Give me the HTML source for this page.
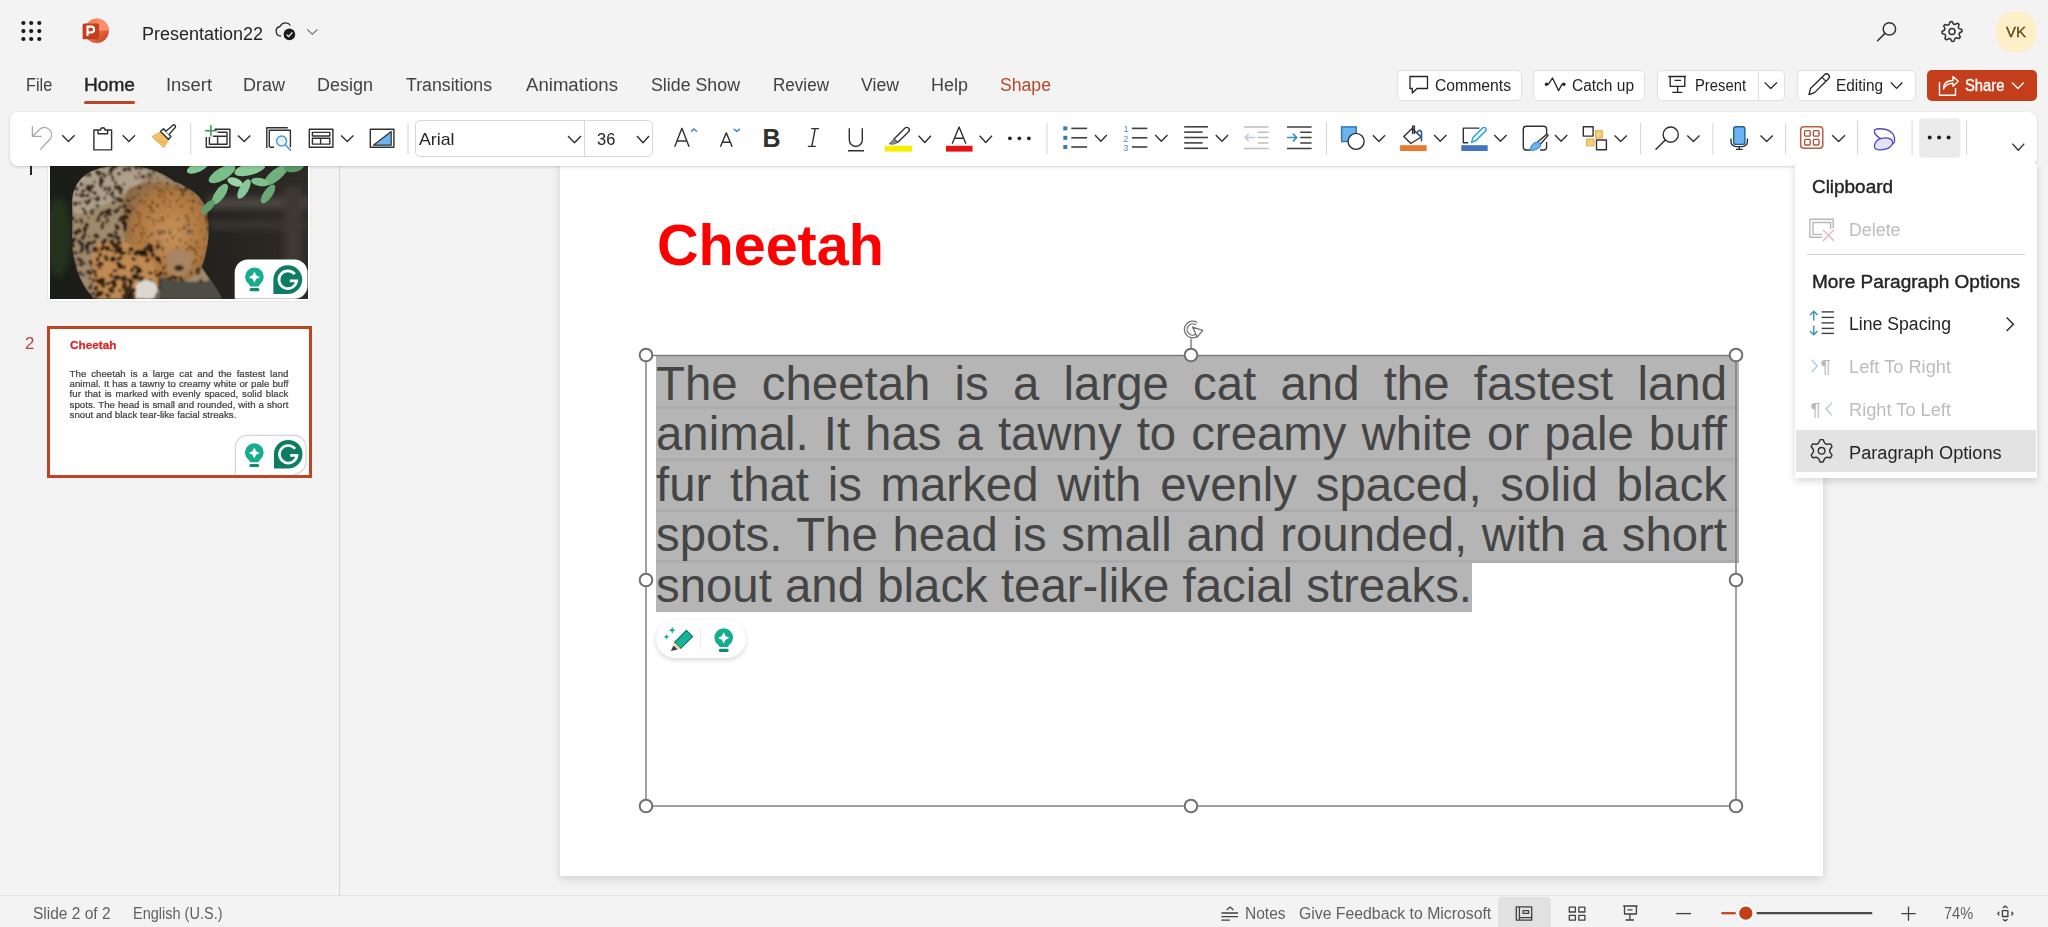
<!DOCTYPE html>
<html><head><meta charset="utf-8"><style>
html,body{margin:0;padding:0}
body{width:2048px;height:927px;overflow:hidden;position:relative;background:#f3f3f3;font-family:"Liberation Sans",sans-serif}
.t{position:absolute;white-space:pre;line-height:0;transform-origin:0 0;z-index:50}
.a{position:absolute}
svg{position:absolute;overflow:visible}

</style></head><body>
<div class='a' style='left:560px;top:120px;width:1263px;height:756px;background:#fff;box-shadow:0 3px 9px rgba(0,0,0,.14)'></div><div class='a' style='left:339px;top:160px;width:1px;height:736px;background:#d6d6d6'></div><div class='a' style='left:0;top:895px;width:2048px;height:1px;background:#e3e3e3'></div><div class='a' style='left:10px;top:112px;width:2027px;height:54px;background:#fff;border-radius:8px;box-shadow:0 1px 3px rgba(0,0,0,.18);z-index:10'></div><div class='a' style='left:84px;top:101px;width:51px;height:3px;border-radius:2px;background:#b9452a'></div><div class='a' style='left:1397px;top:70px;width:125px;height:31px;background:#fff;border:1px solid #e0e0e0;box-sizing:border-box;border-radius:5px'></div><div class='a' style='left:1533px;top:70px;width:112px;height:31px;background:#fff;border:1px solid #e0e0e0;box-sizing:border-box;border-radius:5px'></div><div class='a' style='left:1657px;top:70px;width:128px;height:31px;background:#fff;border:1px solid #e0e0e0;box-sizing:border-box;border-radius:5px'></div><div class='a' style='left:1797px;top:70px;width:119px;height:31px;background:#fff;border:1px solid #e0e0e0;box-sizing:border-box;border-radius:5px'></div><div class='a' style='left:1758px;top:71px;width:1px;height:29px;background:#e0e0e0'></div><div class='a' style='left:1927px;top:70px;width:110px;height:31px;background:#c43e1c;border-radius:5px'></div><div class='a' style='left:1995px;top:11px;width:42px;height:42px;border-radius:50%;background:#fcefc9'></div><div class='a' style='left:415px;top:120px;width:238px;height:37px;border:1px solid #d8d8d8;box-sizing:border-box;border-radius:5px;z-index:11'></div><div class='a' style='left:584px;top:121px;width:1px;height:35px;background:#d8d8d8;z-index:11'></div><div class='a' style='left:1795px;top:164px;width:242px;height:314px;background:#fff;box-shadow:0 3px 8px rgba(0,0,0,.16);clip-path:inset(0 -20px -20px -20px);z-index:40'></div><div class='a' style='left:1807px;top:254px;width:218px;height:1px;background:#cfcfcf;z-index:41'></div><div class='a' style='left:1796px;top:430px;width:240px;height:42px;background:#e3e3e3;z-index:41'></div><div class='a' style='left:1498px;top:897px;width:53px;height:30px;background:#e1e1e1;border-radius:4px 4px 0 0'></div><div class='a' style='left:656px;top:355.5px;width:1083px;height:52.3px;background:#b5b5b5;z-index:2'></div><div class='a' style='left:656px;top:407.8px;width:1083px;height:51.2px;background:#b5b5b5;z-index:2'></div><div class='a' style='left:656px;top:406.3px;width:1083px;height:3px;background:#acacac;z-index:3'></div><div class='a' style='left:656px;top:459px;width:1083px;height:51.2px;background:#b5b5b5;z-index:2'></div><div class='a' style='left:656px;top:457.5px;width:1083px;height:3px;background:#acacac;z-index:3'></div><div class='a' style='left:656px;top:510.2px;width:1083px;height:51.2px;background:#b5b5b5;z-index:2'></div><div class='a' style='left:656px;top:508.7px;width:1083px;height:3px;background:#acacac;z-index:3'></div><div class='a' style='left:656px;top:561.4px;width:816px;height:51.1px;background:#b5b5b5;z-index:2'></div><div class='a' style='left:656px;top:559.9px;width:1083px;height:3px;background:#acacac;z-index:3'></div><div class='a' style='left:656px;top:384.0px;width:1071px;font-size:47.36px;line-height:0;color:#454545;text-align:justify;text-align-last:justify;z-index:5'>The cheetah is a large cat and the fastest land</div><div class='a' style='left:656px;top:434.4px;width:1071px;font-size:47.36px;line-height:0;color:#454545;text-align:justify;text-align-last:justify;z-index:5'>animal. It has a tawny to creamy white or pale buff</div><div class='a' style='left:656px;top:484.8px;width:1071px;font-size:47.36px;line-height:0;color:#454545;text-align:justify;text-align-last:justify;z-index:5'>fur that is marked with evenly spaced, solid black</div><div class='a' style='left:656px;top:535.3px;width:1071px;font-size:47.36px;line-height:0;color:#454545;text-align:justify;text-align-last:justify;z-index:5'>spots. The head is small and rounded, with a short</div><div class='a' style='left:656px;top:585.7px;width:1071px;font-size:47.36px;line-height:0;color:#454545;z-index:5'>snout and black tear-like facial streaks.</div><svg style='left:0;top:0;z-index:6' width='2048' height='927'><rect x='646' y='355.5' width='1090' height='450.5' fill='none' stroke='#7a7a7a' stroke-width='1.4'/><circle cx='646' cy='355' r='6.3' fill='#fff' stroke='#707070' stroke-width='2'/><circle cx='1191' cy='355' r='6.3' fill='#fff' stroke='#707070' stroke-width='2'/><circle cx='1736' cy='355' r='6.3' fill='#fff' stroke='#707070' stroke-width='2'/><circle cx='646' cy='580' r='6.3' fill='#fff' stroke='#707070' stroke-width='2'/><circle cx='1736' cy='580' r='6.3' fill='#fff' stroke='#707070' stroke-width='2'/><circle cx='646' cy='806' r='6.3' fill='#fff' stroke='#707070' stroke-width='2'/><circle cx='1191' cy='806' r='6.3' fill='#fff' stroke='#707070' stroke-width='2'/><circle cx='1736' cy='806' r='6.3' fill='#fff' stroke='#707070' stroke-width='2'/><line x1='1191' y1='338.5' x2='1191' y2='348' stroke='#707070' stroke-width='1.3'/><path d='M1196.8 335.2 A7 7 0 1 1 1196.5 323.6' fill='none' stroke='#707070' stroke-width='4'/><path d='M1196.8 335.2 A7 7 0 1 1 1196.5 323.6' fill='none' stroke='#fff' stroke-width='1.5'/><path d='M1192.6 327.2 L1202.8 330.4 L1197.2 337 Z' fill='#fff' stroke='#707070' stroke-width='1.3' stroke-linejoin='round'/></svg><div class='a' style='left:656px;top:620px;width:90px;height:38px;border-radius:19px;background:#fff;box-shadow:0 2px 5px rgba(0,0,0,.16);z-index:7'></div><div class='a' style='left:700px;top:628px;width:1px;height:21px;background:#ececec;z-index:8'></div><svg style='left:0;top:0;z-index:20' width='2048' height='60'><circle cx='23.4' cy='23' r='2.1' fill='#1a1a1a'/><circle cx='23.4' cy='31.1' r='2.1' fill='#1a1a1a'/><circle cx='23.4' cy='39' r='2.1' fill='#1a1a1a'/><circle cx='31.2' cy='23' r='2.1' fill='#1a1a1a'/><circle cx='31.2' cy='31.1' r='2.1' fill='#1a1a1a'/><circle cx='31.2' cy='39' r='2.1' fill='#1a1a1a'/><circle cx='39.3' cy='23' r='2.1' fill='#1a1a1a'/><circle cx='39.3' cy='31.1' r='2.1' fill='#1a1a1a'/><circle cx='39.3' cy='39' r='2.1' fill='#1a1a1a'/><defs><linearGradient id='pg' x1='0' y1='0' x2='1' y2='1'><stop offset='0' stop-color='#ff8f6b'/><stop offset='.5' stop-color='#ed6c47'/><stop offset='1' stop-color='#c43e1c'/></linearGradient></defs><circle cx='96.7' cy='30.8' r='12.2' fill='url(#pg)'/><path d='M96.7 18.6 A12.2 12.2 0 0 1 108.9 30.8 L96.7 30.8 Z' fill='#ff8f6b'/><rect x='82.6' y='23.6' width='16.5' height='15.6' rx='1.5' fill='#c43e1c'/><path d='M87.5 36 V26.6 H91.2 A2.9 2.9 0 0 1 91.2 32.4 H87.5' fill='none' stroke='#fff' stroke-width='2.1'/><path d='M281 36 A4.8 4.8 0 0 1 280 26.5 A6 6 0 0 1 290.5 25.5' fill='none' stroke='#242424' stroke-width='1.3'/><circle cx='289.4' cy='34.4' r='5.8' fill='#1a1a1a'/><path d='M286.6 34.6 L288.6 36.6 L292.4 32.4' fill='none' stroke='#fff' stroke-width='1.3'/><path d='M307.2 29.3 L312.3 34.3 L317.5 29.3' fill='none' stroke='#616161' stroke-width='1.1'/><circle cx='1889.4' cy='28.9' r='6.2' fill='none' stroke='#333' stroke-width='1.5'/><line x1='1884.9' y1='33.4' x2='1877.6' y2='40.7' stroke='#333' stroke-width='1.6' stroke-linecap='round'/><polygon points='1952.00,21.50 1953.48,24.05 1954.91,24.48 1957.56,23.19 1959.07,24.43 1958.32,27.28 1959.02,28.59 1961.81,29.55 1962.00,31.50 1959.45,32.98 1959.02,34.41 1960.31,37.06 1959.07,38.57 1956.22,37.82 1954.91,38.52 1953.95,41.31 1952.00,41.50 1950.52,38.95 1949.09,38.52 1946.44,39.81 1944.93,38.57 1945.68,35.72 1944.98,34.41 1942.19,33.45 1942.00,31.50 1944.55,30.02 1944.98,28.59 1943.69,25.94 1944.93,24.43 1947.78,25.18 1949.09,24.48 1950.05,21.69' fill='none' stroke='#333' stroke-width='1.5' stroke-linejoin='round'/><circle cx='1952' cy='31.5' r='3' fill='none' stroke='#333' stroke-width='1.5'/></svg><svg style='left:0;top:0;z-index:20' width='2048' height='110'><path d='M1410 76.5 H1427.5 V88.5 H1417 L1412.3 93 V88.5 H1410 Z' fill='none' stroke='#242424' stroke-width='1.3' stroke-linejoin='round'/><path d='M1546.3 84.2 H1548.5 L1552.5 78 L1558.6 90.6 L1562 84.2 H1564' fill='none' stroke='#242424' stroke-width='1.3' stroke-linejoin='round'/><circle cx='1546.5' cy='84.2' r='1.7' fill='#242424'/><circle cx='1563.8' cy='84.2' r='1.7' fill='#242424'/><path d='M1668.3 76.5 H1686 M1670.2 76.5 V86.3 H1684.8 V76.5 M1674.5 80.4 H1681 M1677.6 86.3 V92.4 M1672.3 92.4 H1682.4' fill='none' stroke='#242424' stroke-width='1.3' stroke-linejoin='round'/><path d='M1764.6 82.4 L1770.8 88.5 L1777 82.4' fill='none' stroke='#242424' stroke-width='1.3' stroke-linejoin='round'/><path d='M1809 94.6 L1810.5 88.5 L1824.5 74.8 A2.6 2.6 0 0 1 1828.5 78.8 L1814.5 92.6 Z M1822 77.4 L1826 81.4' fill='none' stroke='#242424' stroke-width='1.3' stroke-linejoin='round'/><path d='M1890.9 82.5 L1896.6 88.4 L1902.3 82.5' fill='none' stroke='#242424' stroke-width='1.3' stroke-linejoin='round'/><path d='M1939.5 82 V95.2 H1955.5 V88' fill='none' stroke='#fff' stroke-width='1.4' stroke-linejoin='round'/><path d='M1943.5 89 C1943.5 83 1947 80.5 1953 80.5 V76.5 L1958.3 81.3 L1953 86.3 V83.3 C1948.5 83.3 1945.5 85 1943.5 89 Z' fill='none' stroke='#fff' stroke-width='1.4' stroke-linejoin='round'/><path d='M2012 82.6 L2017.9 88.6 L2023.8 82.6' fill='none' stroke='#fff' stroke-width='1.4' stroke-linejoin='round'/></svg><svg style='left:0;top:0;z-index:20' width='2048' height='170'><path d='M32.4 126.2 V136.4 H41.8 M32.6 136.2 L40 129 A7.2 7.2 0 0 1 50.5 138.5 L40.2 149.6' fill='none' stroke='#a8a8a8' stroke-width='1.3'/><path d='M62.3 135.3 L68.44999999999999 141.5 L74.6 135.3' fill='none' stroke='#303030' stroke-width='1.4' stroke-linejoin='round'/><path d='M98 130 H93.9 V149.9 H111.6 V130 H107.6' fill='none' stroke='#303030' stroke-width='1.4' stroke-linejoin='round'/><path d='M98 133.8 H107.6 V130 H105 A2.2 2.2 0 0 0 100.6 130 H98 Z' fill='none' stroke='#303030' stroke-width='1.4' stroke-linejoin='round'/><path d='M122.7 135.3 L128.85 141.5 L135.0 135.3' fill='none' stroke='#303030' stroke-width='1.4' stroke-linejoin='round'/><path d='M152 136.6 L160.6 131.8 L168.4 140 L163.8 147.8 Z' fill='#f2c06b' stroke='#e0a040' stroke-width='0.8'/><path d='M154.5 139.5 L165 143.5' stroke='#e8a848' stroke-width='1'/><path d='M160.6 131.4 L163.6 128.8 L171 136.4 L168.6 139.4 Z' fill='#fff' fill='none' stroke='#303030' stroke-width='1.4' stroke-linejoin='round'/><path d='M165.6 131.6 L172.6 125.4 A1.6 1.6 0 0 1 175 127.8 L168.8 134.6' fill='#fff' fill='none' stroke='#303030' stroke-width='1.4' stroke-linejoin='round'/><rect x='190.2' y='123' width='1' height='31' fill='#d4d4d4'/><path d='M214.5 129.3 H229.9 V147.2 H206.3 V137 M217.5 132.2 H227 V144.3 H209.4 V137' fill='none' stroke='#303030' stroke-width='1.4' stroke-linejoin='round' stroke-width='1.3'/><path d='M213 136.3 H227 M217.6 136.3 V144.3' fill='none' stroke='#303030' stroke-width='1.4' stroke-linejoin='round' stroke-width='1.1'/><path d='M210.9 125 V136.6 M205 130.8 H216.8' stroke='#2f9e44' stroke-width='1.5'/><path d='M238 135.4 L244.15 141.6 L250.3 135.4' fill='none' stroke='#303030' stroke-width='1.4' stroke-linejoin='round'/><path d='M266.8 148 V127.7 H287.8' fill='none' stroke='#303030' stroke-width='1.4' stroke-linejoin='round' stroke-width='1.3'/><path d='M269.3 147.2 V130.3 H290.4 V147.2 M274 147.2 H270' fill='none' stroke='#303030' stroke-width='1.4' stroke-linejoin='round' stroke-width='1.3'/><circle cx='281.6' cy='141' r='5' fill='#e3f1fa' stroke='#4a98c8' stroke-width='1.4'/><path d='M285.2 144.8 L291 150.6' stroke='#4a98c8' stroke-width='1.5'/><rect x='309.3' y='129.3' width='23.6' height='17.9' fill='none' stroke='#303030' stroke-width='1.4' stroke-linejoin='round' stroke-width='1.4'/><path d='M312.4 132.4 H329.8 V136 H312.4 Z M312.4 138.2 H329.8 V144.1 H312.4 Z M320.6 138.2 V144.1' fill='none' stroke='#303030' stroke-width='1.4' stroke-linejoin='round' stroke-width='1.1'/><path d='M341.1 135.4 L347.25 141.6 L353.40000000000003 135.4' fill='none' stroke='#303030' stroke-width='1.4' stroke-linejoin='round'/><rect x='370.3' y='129.3' width='23.6' height='17.9' fill='none' stroke='#303030' stroke-width='1.4' stroke-linejoin='round' stroke-width='1.4'/><path d='M373.4 145.2 L391.2 131.6 V145.2 Z' fill='#6cb4ef' stroke='#303030' stroke-width='1.2' stroke-linejoin='round'/><rect x='407.5' y='123' width='1' height='31' fill='#d4d4d4'/><path d='M568 136 L574.5 142.8 L581 136' fill='none' stroke='#303030' stroke-width='1.4' stroke-linejoin='round'/><path d='M637 136 L643.0 142.8 L649 136' fill='none' stroke='#303030' stroke-width='1.4' stroke-linejoin='round'/></svg><svg style='left:0;top:0;z-index:20' width='2048' height='170'><path d='M674.7 146.7 L681.9 128.3 L689.1 146.7 M676.9 141 H686.9' fill='none' stroke='#303030' stroke-width='1.4' stroke-linejoin='round' stroke-width='1.5'/><path d='M691.1 131.8 L694 129 L697 131.8' fill='none' stroke='#3f88b8' stroke-width='1.4'/><path d='M720.4 146.7 L726.3 132.9 L732.2 146.7 M722.3 142.2 H730.3' fill='none' stroke='#303030' stroke-width='1.4' stroke-linejoin='round' stroke-width='1.5'/><path d='M733.7 128.8 L736.8 131.6 L739.9 128.8' fill='none' stroke='#3f88b8' stroke-width='1.4'/><text x='762.6' y='146.7' font-family='Liberation Sans' font-weight='700' font-size='25' fill='#303030'>B</text><path d='M811.2 128.6 H819 M807.8 146.4 H815.8 M815.2 128.6 L811.8 146.4' fill='none' stroke='#303030' stroke-width='1.4' stroke-linejoin='round' stroke-width='1.4'/><path d='M849.3 128.3 V140 A6.5 6.5 0 0 0 862.3 140 V128.3 M848 150.8 H864' fill='none' stroke='#303030' stroke-width='1.4' stroke-linejoin='round' stroke-width='1.5'/><rect x='885' y='145.8' width='27' height='5.8' fill='#f5f000'/><path d='M894 139 L904.8 128.2 A2.4 2.4 0 0 1 908.6 131.8 L897.6 142.6 Z' fill='#fff' fill='none' stroke='#303030' stroke-width='1.4' stroke-linejoin='round' stroke-width='1.3'/><path d='M894 139 L897.6 142.6 L893.8 144.2 L889.4 144 L892.2 140.6 Z' fill='#8a8a8a' stroke='#555' stroke-width='0.8'/><path d='M918.6 135.8 L924.8 142.5 L931 135.8' fill='none' stroke='#303030' stroke-width='1.4' stroke-linejoin='round'/><path d='M952.2 143.7 L959.1 127.1 L965.9 143.7 M954.6 138.3 H963.6' fill='none' stroke='#303030' stroke-width='1.4' stroke-linejoin='round' stroke-width='1.5'/><rect x='946' y='145.8' width='26.5' height='5.8' fill='#e81010'/><path d='M979.6 135.8 L985.8 142.5 L992 135.8' fill='none' stroke='#303030' stroke-width='1.4' stroke-linejoin='round'/><circle cx='1009.9' cy='138.3' r='1.9' fill='#222'/><circle cx='1019.4' cy='138.3' r='1.9' fill='#222'/><circle cx='1028.9' cy='138.3' r='1.9' fill='#222'/><rect x='1046.5' y='123' width='1' height='31' fill='#d4d4d4'/></svg><svg style='left:0;top:0;z-index:20' width='2048' height='170'><rect x='1063.3' y='126.4' width='4' height='4' fill='#2e7eb0'/><path d='M1071.3 128.4 H1087.1' stroke='#404040' stroke-width='1.6'/><path d='M1131.9 128.4 H1147.3' stroke='#404040' stroke-width='1.6'/><rect x='1063.3' y='135.8' width='4' height='4' fill='#2e7eb0'/><path d='M1071.3 137.8 H1087.1' stroke='#404040' stroke-width='1.6'/><path d='M1131.9 137.8 H1147.3' stroke='#404040' stroke-width='1.6'/><rect x='1063.3' y='145' width='4' height='4' fill='#2e7eb0'/><path d='M1071.3 147 H1087.1' stroke='#404040' stroke-width='1.6'/><path d='M1131.9 147 H1147.3' stroke='#404040' stroke-width='1.6'/><path d='M1095 135.1 L1100.9 141.3 L1106.8 135.1' fill='none' stroke='#303030' stroke-width='1.4' stroke-linejoin='round'/><text x='1123.5' y='132.4' font-family='Liberation Sans' font-size='9' fill='#4f94c0'>1</text><text x='1123.3' y='141.8' font-family='Liberation Sans' font-size='9' fill='#4f94c0'>2</text><text x='1123.3' y='151' font-family='Liberation Sans' font-size='9' fill='#4f94c0'>3</text><path d='M1155.2 135.1 L1161.35 141.3 L1167.5 135.1' fill='none' stroke='#303030' stroke-width='1.4' stroke-linejoin='round'/><path d='M1184.2 126.8 H1207.9' stroke='#404040' stroke-width='1.6'/><path d='M1184.2 132.1 H1202.6' stroke='#404040' stroke-width='1.6'/><path d='M1184.2 137.5 H1207.9' stroke='#404040' stroke-width='1.6'/><path d='M1184.2 142.9 H1202.6' stroke='#404040' stroke-width='1.6'/><path d='M1184.2 148.3 H1207.9' stroke='#404040' stroke-width='1.6'/><path d='M1215.8 135.1 L1221.9499999999998 141.3 L1228.1 135.1' fill='none' stroke='#303030' stroke-width='1.4' stroke-linejoin='round'/><path d='M1244 127 H1268.6 M1257.7 132.3 H1268.6 M1257.7 137.5 H1268.6 M1257.7 143 H1268.6 M1244 148.5 H1268.6' stroke='#bdbdbd' stroke-width='1.5'/><path d='M1245.2 137.5 H1255 M1248.7 134 L1245.2 137.5 L1248.7 141' fill='none' stroke='#a9cde2' stroke-width='1.4'/><path d='M1287 127 H1311.6 M1300.2 132.3 H1311.6 M1300.2 137.5 H1311.6 M1300.2 143 H1311.6 M1287 148.5 H1311.6' stroke='#404040' stroke-width='1.6'/><path d='M1287 137.5 H1296.7 M1292.8 133.6 L1296.7 137.5 L1292.8 141.4' fill='none' stroke='#3a8fc0' stroke-width='1.6'/><rect x='1325.9' y='122.3' width='1' height='33.2' fill='#d4d4d4'/><rect x='1341.6' y='126.9' width='14.6' height='14.6' fill='#6cb4ef' stroke='#2f79c0' stroke-width='1.5'/><circle cx='1356.1' cy='141.4' r='8' fill='#fff' stroke='#303030' stroke-width='1.4'/><path d='M1372.9 135.2 L1378.95 141.4 L1385 135.2' fill='none' stroke='#303030' stroke-width='1.4' stroke-linejoin='round'/></svg><svg style='left:0;top:0;z-index:20' width='2048' height='170'><rect x='1400.1' y='145.2' width='26.5' height='5.8' fill='#e8792e'/><path d='M1412.1 128.5 L1421.2 137 L1410.8 143.5 L1403.8 136.5 Z' fill='#fff' fill='none' stroke='#303030' stroke-width='1.4' stroke-linejoin='round' stroke-width='1.4'/><path d='M1412.6 134 V126.5 A1 1 0 0 1 1414.4 126.5 V134' fill='none' stroke='#303030' stroke-width='1.4' stroke-linejoin='round' stroke-width='1.3'/><path d='M1417 133 C1418 130 1420 129.5 1421.5 131.8 V141.5' fill='none' stroke='#1f5fa0' stroke-width='1.6'/><path d='M1434.1 135.1 L1440.25 141.3 L1446.4 135.1' fill='none' stroke='#303030' stroke-width='1.4' stroke-linejoin='round'/><path d='M1479.4 128.1 H1463.3 V142.8 H1468' fill='none' stroke='#303030' stroke-width='1.4' stroke-linejoin='round' stroke-width='1.4'/><path d='M1471.5 142.4 L1473 137.6 L1482.6 128 A1.9 1.9 0 0 1 1485.6 130.9 L1476 140.5 Z' fill='#e6f5fc' stroke='#2b9fd0' stroke-width='1.4' stroke-linejoin='round'/><rect x='1461.3' y='145.2' width='26.4' height='5.8' fill='#4472c4'/><path d='M1494.3 135.1 L1500.4499999999998 141.3 L1506.6 135.1' fill='none' stroke='#303030' stroke-width='1.4' stroke-linejoin='round'/><path d='M1530 150 H1526.3 A3 3 0 0 1 1523.3 147 V129.3 A3 3 0 0 1 1526.3 126.3 H1543.6 A3 3 0 0 1 1546.6 129.3 V134 M1546.6 142 V147 A3 3 0 0 1 1543.6 150 H1540' fill='none' stroke='#303030' stroke-width='1.4' stroke-linejoin='round' stroke-width='1.4'/><path d='M1537.5 142 L1546.8 134.4 A1 1 0 0 1 1548 135.6 L1540 144.5' fill='#fff' fill='none' stroke='#303030' stroke-width='1.4' stroke-linejoin='round' stroke-width='1.2'/><path d='M1528.6 150.3 C1531 149 1531 144 1535 142.5 L1538.5 141.8 L1540.6 144.4 L1539.8 147.2 C1536 150.6 1532 150.6 1528.6 150.3 Z' fill='#6cb4ef' stroke='#2f79c0' stroke-width='1'/><path d='M1555 135.1 L1561.1 141.3 L1567.2 135.1' fill='none' stroke='#303030' stroke-width='1.4' stroke-linejoin='round'/><rect x='1595.5' y='130.7' width='6.8' height='7.3' fill='#f5d07a' stroke='#e0a840' stroke-width='1'/><rect x='1586.7' y='139' width='7.3' height='6.8' fill='#f5d07a' stroke='#e0a840' stroke-width='1'/><rect x='1583.3' y='126.8' width='9.8' height='9.3' fill='#fff' fill='none' stroke='#303030' stroke-width='1.4' stroke-linejoin='round' stroke-width='1.4'/><rect x='1596.5' y='140' width='9.9' height='9.7' fill='#fff' fill='none' stroke='#303030' stroke-width='1.4' stroke-linejoin='round' stroke-width='1.4'/><path d='M1614.6 135.6 L1620.6999999999998 141.4 L1626.8 135.6' fill='none' stroke='#303030' stroke-width='1.4' stroke-linejoin='round'/><rect x='1640.1' y='122.9' width='1' height='31.69999999999999' fill='#d4d4d4'/><circle cx='1670.7' cy='134.6' r='7.6' fill='none' stroke='#303030' stroke-width='1.4' stroke-linejoin='round' stroke-width='1.5'/><path d='M1665.3 140 L1656 149.2' stroke='#303030' stroke-width='1.5' stroke-linecap='round'/><path d='M1687.3 135.6 L1693.4 141.4 L1699.5 135.6' fill='none' stroke='#303030' stroke-width='1.4' stroke-linejoin='round'/><rect x='1712.4' y='122.9' width='1' height='31.69999999999999' fill='#d4d4d4'/><rect x='1733.7' y='126.8' width='11.2' height='17.6' rx='2.2' fill='#6cb4ef' stroke='#1f5fa0' stroke-width='1.4'/><path d='M1731 138.5 V141.5 A5 5 0 0 0 1736 146.6 H1742.5 A5 5 0 0 0 1747.4 141.5 V138.5 M1739.3 146.6 V149.2 M1736 149.4 H1742.6' fill='none' stroke='#303030' stroke-width='1.4' stroke-linejoin='round' stroke-width='1.3'/><path d='M1760.5 135.6 L1766.65 141.4 L1772.8 135.6' fill='none' stroke='#303030' stroke-width='1.4' stroke-linejoin='round'/><rect x='1785.2' y='122.9' width='1' height='31.69999999999999' fill='#d4d4d4'/><rect x='1800.7' y='126.7' width='22.1' height='21.6' rx='3.2' fill='#fff' stroke='#b9603f' stroke-width='1.5'/><rect x='1804.6' y='130.6' width='5.6' height='5.6' rx='1' fill='none' stroke='#a65236' stroke-width='1.3'/><rect x='1813.4' y='130.6' width='5.6' height='5.6' rx='1' fill='none' stroke='#a65236' stroke-width='1.3'/><rect x='1804.6' y='139.4' width='5.6' height='5.6' rx='1' fill='none' stroke='#a65236' stroke-width='1.3'/><rect x='1813.4' y='139.4' width='5.6' height='5.6' rx='1' fill='none' stroke='#a65236' stroke-width='1.3'/><path d='M1832.2 135.3 L1838.6 141.4 L1845 135.3' fill='none' stroke='#303030' stroke-width='1.4' stroke-linejoin='round'/><rect x='1857.2' y='120.8' width='1' height='34.2' fill='#d4d4d4'/><path d='M1880.5 138.6 C1889 136.5 1893.8 139.5 1892.4 144 C1890 149 1884 150 1879 149.8 C1874 149.5 1874 146.5 1874.8 144 C1876 141 1878 139.3 1880.5 138.6 Z' fill='#e3e0fa' stroke='#5246c0' stroke-width='1.3'/><path d='M1880.5 138.6 C1876 136 1874 133 1874.4 130 C1877 128.5 1882 128.6 1886 129.5 C1892 131 1895.5 136 1894.6 141 C1894.2 143 1893.4 144 1892.4 144' fill='none' stroke='#5246c0' stroke-width='1.3'/><rect x='1911.6' y='120.8' width='1' height='34.2' fill='#d4d4d4'/><rect x='1919.2' y='118.6' width='41.3' height='39.1' rx='4' fill='#ebebeb'/><circle cx='1929.7' cy='137.5' r='2' fill='#1f1f1f'/><circle cx='1939.1' cy='137.5' r='2' fill='#1f1f1f'/><circle cx='1948.6' cy='137.5' r='2' fill='#1f1f1f'/><rect x='1966.1' y='120.8' width='1' height='34.2' fill='#d4d4d4'/><path d='M2012.3 143.6 L2018.3 150.2 L2024.3 143.6' fill='none' stroke='#303030' stroke-width='1.4' stroke-linejoin='round'/></svg><svg style='left:0;top:0;z-index:45' width='2048' height='500'><path d='M1822 237.2 H1809.9 V219.3 H1833.2 V228' fill='none' stroke='#b8b8b8' stroke-width='1.4'/><path d='M1822 234.4 H1813 V222.5 H1830.6 V229' fill='none' stroke='#b8b8b8' stroke-width='1.4' stroke-width='1.1'/><path d='M1822.9 229.8 L1834 241 M1834 229.8 L1822.9 241' stroke='#eab4bc' stroke-width='1.3'/><path d='M1813.8 311.5 V320.5 M1813.8 325.5 V334.5 M1810 315 L1813.8 311.2 L1817.6 315 M1810 331 L1813.8 334.8 L1817.6 331' fill='none' stroke='#3a8fc0' stroke-width='1.4'/><path d='M1821.6 311.9 H1833.9' stroke='#404040' stroke-width='1.4'/><path d='M1821.6 317.4 H1833.9' stroke='#404040' stroke-width='1.4'/><path d='M1821.6 322.9 H1833.9' stroke='#404040' stroke-width='1.4'/><path d='M1821.6 328.4 H1833.9' stroke='#404040' stroke-width='1.4'/><path d='M1821.6 333.4 H1833.9' stroke='#404040' stroke-width='1.4'/><path d='M2006.6 317.5 L2013.4 324.3 L2006.6 331' fill='none' stroke='#303030' stroke-width='1.5'/><path d='M1811.6 359.8 L1817.2 366 L1811.6 372.2' fill='none' stroke='#a9cde2' stroke-width='1.4'/><text x='1820.6' y='372.6' font-family='Liberation Sans' font-size='19' fill='#b8b8b8'>&#182;</text><text x='1810.4' y='415.6' font-family='Liberation Sans' font-size='19' fill='#b8b8b8'>&#182;</text><path d='M1831.9 402.8 L1826 409 L1831.9 415.2' fill='none' stroke='#a9cde2' stroke-width='1.4'/><polygon points='1823.07,439.60 1824.74,443.22 1826.59,444.29 1830.56,443.92 1832.04,446.48 1829.73,449.73 1829.73,451.87 1832.04,455.12 1830.56,457.68 1826.59,457.31 1824.74,458.38 1823.07,462.00 1820.13,462.00 1818.46,458.38 1816.61,457.31 1812.64,457.68 1811.16,455.12 1813.47,451.87 1813.47,449.73 1811.16,446.48 1812.64,443.92 1816.61,444.29 1818.46,443.22 1820.13,439.60' fill='none' stroke='#303030' stroke-width='1.4' stroke-linejoin='round'/><circle cx='1821.6' cy='450.8' r='3.3' fill='none' stroke='#303030' stroke-width='1.4'/></svg><svg style='left:0;top:880px;z-index:20' width='2048' height='47'><path d='M1226.6 29.899999999999977 L1230.1 27.100000000000023 L1233.3 29.899999999999977 M1221.4 33 H1238 M1221.4 36.60000000000002 H1238 M1221.4 40.10000000000002 H1229.9' fill='none' stroke='#404040' stroke-width='1.3' stroke-linejoin='round'/><path d='M1516.3 26.899999999999977 H1531.7 V40.200000000000045 H1516.3 Z M1519.4 26.899999999999977 V40.200000000000045 M1519.4 37.60000000000002 H1531.7' fill='none' stroke='#404040' stroke-width='1.3' stroke-linejoin='round' stroke-width='1.4'/><rect x='1523.1' y='30.600000000000023' width='5.5' height='2.8' fill='none' stroke='#404040' stroke-width='1.3' stroke-linejoin='round' stroke-width='1.2'/><rect x='1569.3' y='27.200000000000045' width='6.1' height='4.8' fill='none' stroke='#404040' stroke-width='1.3' stroke-linejoin='round' stroke-width='1.4'/><rect x='1569.3' y='35.39999999999998' width='6.1' height='4.8' fill='none' stroke='#404040' stroke-width='1.3' stroke-linejoin='round' stroke-width='1.4'/><rect x='1578.8' y='27.200000000000045' width='6.1' height='4.8' fill='none' stroke='#404040' stroke-width='1.3' stroke-linejoin='round' stroke-width='1.4'/><rect x='1578.8' y='35.39999999999998' width='6.1' height='4.8' fill='none' stroke='#404040' stroke-width='1.3' stroke-linejoin='round' stroke-width='1.4'/><path d='M1623.2 26 H1637.6 M1624.5 26 V34 H1636.4 V26 M1627.4 29.799999999999955 H1632.5 M1629.9 34 V40 M1625.6 40 H1634' fill='none' stroke='#404040' stroke-width='1.3' stroke-linejoin='round' stroke-width='1.4'/><path d='M1676 33.60000000000002 H1691' fill='none' stroke='#404040' stroke-width='1.3' stroke-linejoin='round'/><path d='M1721.4 33.200000000000045 H1736' stroke='#c43e1c' stroke-width='2.2'/><path d='M1756.7 33.200000000000045 H1872.2' stroke='#4a4a4a' stroke-width='2.2'/><circle cx='1745.8' cy='33.200000000000045' r='9.8' fill='#fff' stroke='#e6e6e6' stroke-width='0.8'/><circle cx='1745.8' cy='33.200000000000045' r='6.6' fill='#c43e1c'/><path d='M1901.3 33.60000000000002 H1915.7 M1908.5 26.399999999999977 V40.799999999999955' fill='none' stroke='#404040' stroke-width='1.3' stroke-linejoin='round'/><rect x='2002.4' y='30.600000000000023' width='5.5' height='5.9' fill='none' stroke='#404040' stroke-width='1.3' stroke-linejoin='round' stroke-width='1.4'/><path d='M2002.8 27.899999999999977 L2005.2 26.100000000000023 L2007.6 27.899999999999977 M2002.8 39.200000000000045 L2005.2 40.89999999999998 L2007.6 39.200000000000045 M1999.4 31.700000000000045 L1997.7 33.60000000000002 L1999.4 35.39999999999998 M2011.3 31.700000000000045 L2013 33.60000000000002 L2011.3 35.39999999999998' fill='none' stroke='#404040' stroke-width='1.3' stroke-linejoin='round' stroke-width='1.2'/></svg><div class='a' style='left:30.4px;top:160px;width:1.9px;height:14.7px;background:#242424;z-index:1'></div><div class='a' style='left:48px;top:145px;width:262px;height:156px;background:#fff;box-shadow:0 0 1px rgba(0,0,0,.25)'></div><svg style='left:50px;top:147px' width='258' height='152' viewBox='0 0 258 152'><defs><clipPath id='c1'><rect width='258' height='152'/></clipPath><filter id='bl' x='-10%' y='-10%' width='120%' height='120%'><feGaussianBlur stdDeviation='1.2'/></filter><filter id='bl2' x='-10%' y='-10%' width='120%' height='120%'><feGaussianBlur stdDeviation='0.6'/></filter><filter id='bl4' x='-10%' y='-10%' width='120%' height='120%'><feGaussianBlur stdDeviation='0.9'/></filter><filter id='bl3' x='-20%' y='-20%' width='140%' height='140%'><feGaussianBlur stdDeviation='3'/></filter><clipPath id='cb'><path d='M22 62 C20 38 34 21 62 19 C90 17 108 22 124 34 C140 40 152 48 157 64 C161 84 158 104 152 120 C160 132 168 142 172 152 H44 C32 140 24 122 22 100 Z'/></clipPath><radialGradient id='hd' cx='.55' cy='.5' r='.55'><stop offset='0' stop-color='#c8925c'/><stop offset='.7' stop-color='#b07840'/><stop offset='1' stop-color='#8f6c48'/></radialGradient><linearGradient id='bk' x1='0' y1='0' x2='1' y2='0'><stop offset='0' stop-color='#1a1c18'/><stop offset='.6' stop-color='#24221e'/><stop offset='1' stop-color='#2f2b27'/></linearGradient></defs><g clip-path='url(#c1)'><rect width='258' height='152' fill='url(#bk)'/><ellipse cx='8' cy='90' rx='14' ry='40' fill='#24301f' filter='url(#bl3)'/><g filter='url(#bl3)'><rect x='158' y='50' width='100' height='12' fill='#4a453f'/><rect x='158' y='74' width='100' height='8' fill='#3a3631'/><rect x='234' y='40' width='18' height='112' fill='#3d3833'/></g><g clip-path='url(#cb)'><g filter='url(#bl4)'><path d='M22 62 C20 38 34 21 62 19 C90 17 108 22 124 34 C140 40 152 48 157 64 C161 84 158 104 152 120 C160 132 168 142 172 152 H44 C32 140 24 122 22 100 Z' fill='#a08a6c'/><path d='M22 30 C40 18 80 16 100 24 C90 40 70 50 50 60 C35 66 24 70 22 62 Z' fill='#aea08a'/><path d='M78 42 C100 30 135 34 156 54 C162 76 160 100 152 120 C142 134 126 140 112 138 C92 136 80 120 76 100 C72 80 70 56 78 42 Z' fill='url(#hd)'/><path d='M46 96 C62 88 88 94 104 118 C110 134 106 152 106 152 H46 C40 134 40 110 46 96 Z' fill='#c08a52'/><ellipse cx='65.6' cy='35.7' rx='2.2' ry='1.3' transform='rotate(96 65.6 35.7)' fill='#2a1c12'/><ellipse cx='103.7' cy='139.6' rx='2.0' ry='1.1' transform='rotate(75 103.7 139.6)' fill='#1f150e'/><ellipse cx='31.3' cy='73.2' rx='2.5' ry='1.5' transform='rotate(40 31.3 73.2)' fill='#3a2a1c'/><ellipse cx='103.7' cy='23.5' rx='1.8' ry='1.0' transform='rotate(40 103.7 23.5)' fill='#3a2a1c'/><ellipse cx='144.2' cy='54.7' rx='0.7' ry='0.4' transform='rotate(56 144.2 54.7)' fill='#3a2a1c'/><ellipse cx='44.6' cy='94.7' rx='2.2' ry='1.5' transform='rotate(99 44.6 94.7)' fill='#1f150e'/><ellipse cx='101.0' cy='99.8' rx='2.5' ry='1.9' transform='rotate(140 101.0 99.8)' fill='#2a1c12'/><ellipse cx='104.1' cy='77.1' rx='0.9' ry='0.7' transform='rotate(126 104.1 77.1)' fill='#1f150e'/><ellipse cx='30.0' cy='56.1' rx='1.9' ry='1.3' transform='rotate(81 30.0 56.1)' fill='#3a2a1c'/><ellipse cx='162.1' cy='31.2' rx='1.6' ry='1.3' transform='rotate(27 162.1 31.2)' fill='#2a1c12'/><ellipse cx='80.0' cy='146.8' rx='1.7' ry='1.2' transform='rotate(142 80.0 146.8)' fill='#2a1c12'/><ellipse cx='68.0' cy='63.0' rx='1.9' ry='1.6' transform='rotate(12 68.0 63.0)' fill='#1f150e'/><ellipse cx='156.9' cy='80.0' rx='1.2' ry='0.7' transform='rotate(126 156.9 80.0)' fill='#3a2a1c'/><ellipse cx='103.0' cy='108.3' rx='2.4' ry='2.0' transform='rotate(160 103.0 108.3)' fill='#2a1c12'/><ellipse cx='21.3' cy='78.3' rx='1.4' ry='0.8' transform='rotate(11 21.3 78.3)' fill='#2a1c12'/><ellipse cx='37.0' cy='48.9' rx='1.8' ry='1.5' transform='rotate(15 37.0 48.9)' fill='#2a1c12'/><ellipse cx='77.0' cy='53.1' rx='1.4' ry='1.0' transform='rotate(99 77.0 53.1)' fill='#3a2a1c'/><ellipse cx='79.0' cy='64.2' rx='2.6' ry='2.3' transform='rotate(27 79.0 64.2)' fill='#1f150e'/><ellipse cx='40.2' cy='105.2' rx='1.2' ry='1.0' transform='rotate(33 40.2 105.2)' fill='#2a1c12'/><ellipse cx='18.6' cy='72.4' rx='1.7' ry='1.3' transform='rotate(172 18.6 72.4)' fill='#3a2a1c'/><ellipse cx='144.3' cy='145.2' rx='1.9' ry='1.6' transform='rotate(82 144.3 145.2)' fill='#3a2a1c'/><ellipse cx='135.3' cy='68.8' rx='0.9' ry='0.5' transform='rotate(114 135.3 68.8)' fill='#1f150e'/><ellipse cx='46.0' cy='149.9' rx='2.4' ry='1.4' transform='rotate(108 46.0 149.9)' fill='#1f150e'/><ellipse cx='18.0' cy='35.7' rx='1.3' ry='0.9' transform='rotate(5 18.0 35.7)' fill='#1f150e'/><ellipse cx='108.3' cy='35.4' rx='0.8' ry='0.5' transform='rotate(66 108.3 35.4)' fill='#1f150e'/><ellipse cx='35.0' cy='81.9' rx='2.7' ry='2.0' transform='rotate(56 35.0 81.9)' fill='#1f150e'/><ellipse cx='33.0' cy='61.9' rx='1.6' ry='1.3' transform='rotate(29 33.0 61.9)' fill='#1f150e'/><ellipse cx='48.2' cy='145.4' rx='2.3' ry='1.8' transform='rotate(165 48.2 145.4)' fill='#3a2a1c'/><ellipse cx='61.8' cy='103.1' rx='1.7' ry='1.4' transform='rotate(93 61.8 103.1)' fill='#1f150e'/><ellipse cx='70.3' cy='45.5' rx='2.0' ry='1.5' transform='rotate(115 70.3 45.5)' fill='#3a2a1c'/><ellipse cx='137.3' cy='149.9' rx='2.2' ry='1.8' transform='rotate(147 137.3 149.9)' fill='#3a2a1c'/><ellipse cx='136.1' cy='42.4' rx='1.0' ry='0.8' transform='rotate(178 136.1 42.4)' fill='#2a1c12'/><ellipse cx='87.4' cy='41.5' rx='1.1' ry='0.7' transform='rotate(146 87.4 41.5)' fill='#3a2a1c'/><ellipse cx='163.2' cy='145.8' rx='1.5' ry='0.9' transform='rotate(41 163.2 145.8)' fill='#1f150e'/><ellipse cx='67.6' cy='81.1' rx='2.7' ry='2.1' transform='rotate(0 67.6 81.1)' fill='#3a2a1c'/><ellipse cx='68.6' cy='103.1' rx='3.3' ry='1.9' transform='rotate(70 68.6 103.1)' fill='#3a2a1c'/><ellipse cx='128.3' cy='80.5' rx='0.7' ry='0.6' transform='rotate(60 128.3 80.5)' fill='#3a2a1c'/><ellipse cx='76.2' cy='70.0' rx='2.7' ry='2.1' transform='rotate(31 76.2 70.0)' fill='#1f150e'/><ellipse cx='22.0' cy='95.9' rx='1.9' ry='1.5' transform='rotate(110 22.0 95.9)' fill='#3a2a1c'/><ellipse cx='162.1' cy='105.0' rx='1.5' ry='1.1' transform='rotate(24 162.1 105.0)' fill='#1f150e'/><ellipse cx='135.5' cy='114.5' rx='1.1' ry='0.9' transform='rotate(25 135.5 114.5)' fill='#1f150e'/><ellipse cx='139.4' cy='43.9' rx='0.8' ry='0.5' transform='rotate(43 139.4 43.9)' fill='#3a2a1c'/><ellipse cx='65.9' cy='89.6' rx='2.5' ry='1.4' transform='rotate(133 65.9 89.6)' fill='#2a1c12'/><ellipse cx='115.4' cy='126.7' rx='1.7' ry='1.4' transform='rotate(158 115.4 126.7)' fill='#1f150e'/><ellipse cx='96.2' cy='86.7' rx='0.6' ry='0.4' transform='rotate(33 96.2 86.7)' fill='#1f150e'/><ellipse cx='132.1' cy='35.5' rx='0.7' ry='0.6' transform='rotate(22 132.1 35.5)' fill='#1f150e'/><ellipse cx='65.9' cy='86.0' rx='2.0' ry='1.7' transform='rotate(19 65.9 86.0)' fill='#3a2a1c'/><ellipse cx='26.4' cy='41.2' rx='1.2' ry='0.7' transform='rotate(81 26.4 41.2)' fill='#1f150e'/><ellipse cx='129.7' cy='140.0' rx='1.6' ry='1.2' transform='rotate(91 129.7 140.0)' fill='#3a2a1c'/><ellipse cx='47.3' cy='53.0' rx='2.0' ry='1.6' transform='rotate(91 47.3 53.0)' fill='#1f150e'/><ellipse cx='120.8' cy='135.1' rx='2.3' ry='1.5' transform='rotate(101 120.8 135.1)' fill='#1f150e'/><ellipse cx='141.5' cy='33.8' rx='0.7' ry='0.5' transform='rotate(13 141.5 33.8)' fill='#1f150e'/><ellipse cx='81.0' cy='44.1' rx='0.9' ry='0.5' transform='rotate(140 81.0 44.1)' fill='#3a2a1c'/><ellipse cx='112.6' cy='65.2' rx='0.8' ry='0.5' transform='rotate(84 112.6 65.2)' fill='#3a2a1c'/><ellipse cx='158.0' cy='69.6' rx='1.0' ry='0.9' transform='rotate(150 158.0 69.6)' fill='#1f150e'/><ellipse cx='121.8' cy='151.2' rx='1.6' ry='1.1' transform='rotate(64 121.8 151.2)' fill='#1f150e'/><ellipse cx='124.2' cy='17.7' rx='1.8' ry='1.3' transform='rotate(3 124.2 17.7)' fill='#2a1c12'/><ellipse cx='94.1' cy='55.5' rx='1.4' ry='0.8' transform='rotate(165 94.1 55.5)' fill='#1f150e'/><ellipse cx='160.8' cy='29.4' rx='1.4' ry='0.8' transform='rotate(140 160.8 29.4)' fill='#2a1c12'/><ellipse cx='129.1' cy='127.3' rx='2.2' ry='1.7' transform='rotate(170 129.1 127.3)' fill='#2a1c12'/><ellipse cx='40.0' cy='140.9' rx='2.1' ry='1.6' transform='rotate(16 40.0 140.9)' fill='#1f150e'/><ellipse cx='135.5' cy='40.1' rx='1.4' ry='0.9' transform='rotate(3 135.5 40.1)' fill='#1f150e'/><ellipse cx='135.8' cy='26.5' rx='2.2' ry='1.3' transform='rotate(155 135.8 26.5)' fill='#2a1c12'/><ellipse cx='19.7' cy='151.2' rx='1.8' ry='1.6' transform='rotate(112 19.7 151.2)' fill='#1f150e'/><ellipse cx='95.5' cy='47.7' rx='0.7' ry='0.4' transform='rotate(9 95.5 47.7)' fill='#1f150e'/><ellipse cx='155.0' cy='101.1' rx='1.0' ry='0.7' transform='rotate(80 155.0 101.1)' fill='#3a2a1c'/><ellipse cx='44.2' cy='62.5' rx='1.2' ry='0.8' transform='rotate(3 44.2 62.5)' fill='#3a2a1c'/><ellipse cx='92.3' cy='149.0' rx='2.6' ry='1.6' transform='rotate(80 92.3 149.0)' fill='#3a2a1c'/><ellipse cx='138.4' cy='74.2' rx='1.0' ry='0.9' transform='rotate(71 138.4 74.2)' fill='#3a2a1c'/><ellipse cx='63.2' cy='44.5' rx='1.5' ry='0.9' transform='rotate(159 63.2 44.5)' fill='#3a2a1c'/><ellipse cx='111.5' cy='70.4' rx='0.9' ry='0.5' transform='rotate(23 111.5 70.4)' fill='#1f150e'/><ellipse cx='109.9' cy='135.5' rx='2.4' ry='1.4' transform='rotate(120 109.9 135.5)' fill='#2a1c12'/><ellipse cx='146.0' cy='106.9' rx='0.8' ry='0.5' transform='rotate(53 146.0 106.9)' fill='#2a1c12'/><ellipse cx='45.2' cy='51.9' rx='1.2' ry='0.8' transform='rotate(59 45.2 51.9)' fill='#3a2a1c'/><ellipse cx='65.6' cy='19.7' rx='2.6' ry='1.6' transform='rotate(33 65.6 19.7)' fill='#2a1c12'/><ellipse cx='74.1' cy='80.0' rx='2.0' ry='1.2' transform='rotate(91 74.1 80.0)' fill='#1f150e'/><ellipse cx='31.4' cy='126.9' rx='1.4' ry='1.0' transform='rotate(71 31.4 126.9)' fill='#2a1c12'/><ellipse cx='62.7' cy='46.9' rx='2.1' ry='1.5' transform='rotate(135 62.7 46.9)' fill='#3a2a1c'/><ellipse cx='149.2' cy='122.4' rx='1.8' ry='1.5' transform='rotate(130 149.2 122.4)' fill='#2a1c12'/><ellipse cx='40.0' cy='114.2' rx='2.2' ry='1.2' transform='rotate(150 40.0 114.2)' fill='#3a2a1c'/><ellipse cx='110.2' cy='115.5' rx='2.1' ry='1.3' transform='rotate(94 110.2 115.5)' fill='#3a2a1c'/><ellipse cx='101.6' cy='126.4' rx='1.5' ry='1.2' transform='rotate(144 101.6 126.4)' fill='#3a2a1c'/><ellipse cx='118.4' cy='110.0' rx='0.8' ry='0.4' transform='rotate(24 118.4 110.0)' fill='#2a1c12'/><ellipse cx='159.0' cy='66.6' rx='1.0' ry='0.6' transform='rotate(3 159.0 66.6)' fill='#3a2a1c'/><ellipse cx='118.1' cy='82.0' rx='0.6' ry='0.5' transform='rotate(135 118.1 82.0)' fill='#3a2a1c'/><ellipse cx='150.0' cy='27.6' rx='1.7' ry='1.4' transform='rotate(85 150.0 27.6)' fill='#1f150e'/><ellipse cx='142.4' cy='47.2' rx='1.2' ry='0.8' transform='rotate(117 142.4 47.2)' fill='#2a1c12'/><ellipse cx='90.6' cy='67.4' rx='1.0' ry='0.8' transform='rotate(138 90.6 67.4)' fill='#3a2a1c'/><ellipse cx='111.0' cy='42.2' rx='1.1' ry='0.7' transform='rotate(117 111.0 42.2)' fill='#3a2a1c'/><ellipse cx='62.7' cy='92.8' rx='1.2' ry='0.7' transform='rotate(48 62.7 92.8)' fill='#3a2a1c'/><ellipse cx='32.6' cy='44.8' rx='1.9' ry='1.5' transform='rotate(51 32.6 44.8)' fill='#2a1c12'/><ellipse cx='86.6' cy='31.2' rx='1.4' ry='0.8' transform='rotate(176 86.6 31.2)' fill='#2a1c12'/><ellipse cx='20.6' cy='77.9' rx='2.5' ry='2.2' transform='rotate(81 20.6 77.9)' fill='#2a1c12'/><ellipse cx='74.9' cy='140.6' rx='3.5' ry='2.0' transform='rotate(16 74.9 140.6)' fill='#3a2a1c'/><ellipse cx='95.0' cy='145.5' rx='1.8' ry='1.5' transform='rotate(92 95.0 145.5)' fill='#1f150e'/><ellipse cx='121.4' cy='46.7' rx='1.4' ry='1.0' transform='rotate(4 121.4 46.7)' fill='#1f150e'/><ellipse cx='157.6' cy='108.4' rx='0.9' ry='0.8' transform='rotate(75 157.6 108.4)' fill='#2a1c12'/><ellipse cx='64.5' cy='130.1' rx='1.5' ry='1.2' transform='rotate(151 64.5 130.1)' fill='#1f150e'/><ellipse cx='156.2' cy='41.8' rx='0.6' ry='0.5' transform='rotate(46 156.2 41.8)' fill='#1f150e'/><ellipse cx='75.8' cy='151.8' rx='2.7' ry='1.9' transform='rotate(77 75.8 151.8)' fill='#2a1c12'/><ellipse cx='143.6' cy='53.4' rx='0.6' ry='0.5' transform='rotate(114 143.6 53.4)' fill='#1f150e'/><ellipse cx='54.7' cy='51.4' rx='2.0' ry='1.2' transform='rotate(67 54.7 51.4)' fill='#2a1c12'/><ellipse cx='148.0' cy='126.2' rx='1.9' ry='1.6' transform='rotate(169 148.0 126.2)' fill='#3a2a1c'/><ellipse cx='47.9' cy='26.0' rx='2.7' ry='1.8' transform='rotate(111 47.9 26.0)' fill='#1f150e'/><ellipse cx='112.7' cy='54.2' rx='0.6' ry='0.6' transform='rotate(23 112.7 54.2)' fill='#2a1c12'/><ellipse cx='79.0' cy='53.6' rx='1.6' ry='1.3' transform='rotate(118 79.0 53.6)' fill='#2a1c12'/><ellipse cx='114.4' cy='56.2' rx='1.1' ry='0.7' transform='rotate(30 114.4 56.2)' fill='#1f150e'/><ellipse cx='29.1' cy='83.6' rx='2.5' ry='1.8' transform='rotate(82 29.1 83.6)' fill='#2a1c12'/><ellipse cx='164.5' cy='76.6' rx='1.2' ry='0.7' transform='rotate(16 164.5 76.6)' fill='#2a1c12'/><ellipse cx='99.7' cy='58.7' rx='0.9' ry='0.8' transform='rotate(36 99.7 58.7)' fill='#1f150e'/><ellipse cx='128.2' cy='71.6' rx='0.9' ry='0.7' transform='rotate(68 128.2 71.6)' fill='#2a1c12'/><ellipse cx='128.6' cy='83.2' rx='1.1' ry='0.7' transform='rotate(124 128.6 83.2)' fill='#3a2a1c'/><ellipse cx='110.6' cy='133.2' rx='1.3' ry='0.8' transform='rotate(45 110.6 133.2)' fill='#2a1c12'/><ellipse cx='112.9' cy='74.2' rx='0.9' ry='0.7' transform='rotate(174 112.9 74.2)' fill='#1f150e'/><ellipse cx='22.7' cy='112.2' rx='2.6' ry='1.9' transform='rotate(106 22.7 112.2)' fill='#1f150e'/><ellipse cx='28.8' cy='142.4' rx='2.6' ry='1.9' transform='rotate(84 28.8 142.4)' fill='#2a1c12'/><ellipse cx='54.5' cy='29.9' rx='1.4' ry='1.0' transform='rotate(123 54.5 29.9)' fill='#3a2a1c'/><ellipse cx='121.0' cy='131.0' rx='2.3' ry='1.3' transform='rotate(140 121.0 131.0)' fill='#1f150e'/><ellipse cx='133.0' cy='46.9' rx='1.4' ry='1.1' transform='rotate(55 133.0 46.9)' fill='#1f150e'/><ellipse cx='110.1' cy='87.4' rx='1.0' ry='0.8' transform='rotate(18 110.1 87.4)' fill='#2a1c12'/><ellipse cx='95.1' cy='94.9' rx='0.9' ry='0.6' transform='rotate(108 95.1 94.9)' fill='#1f150e'/><ellipse cx='97.0' cy='151.5' rx='2.1' ry='1.4' transform='rotate(151 97.0 151.5)' fill='#1f150e'/><ellipse cx='87.9' cy='47.2' rx='0.8' ry='0.7' transform='rotate(127 87.9 47.2)' fill='#2a1c12'/><ellipse cx='26.1' cy='41.6' rx='2.6' ry='2.0' transform='rotate(15 26.1 41.6)' fill='#1f150e'/><ellipse cx='116.1' cy='141.7' rx='1.3' ry='0.7' transform='rotate(61 116.1 141.7)' fill='#2a1c12'/><ellipse cx='71.3' cy='69.3' rx='1.2' ry='0.8' transform='rotate(152 71.3 69.3)' fill='#1f150e'/><ellipse cx='48.2' cy='147.9' rx='2.2' ry='1.8' transform='rotate(42 48.2 147.9)' fill='#1f150e'/><ellipse cx='57.0' cy='136.8' rx='1.7' ry='1.3' transform='rotate(110 57.0 136.8)' fill='#1f150e'/><ellipse cx='89.3' cy='139.7' rx='1.6' ry='1.2' transform='rotate(166 89.3 139.7)' fill='#1f150e'/><ellipse cx='49.3' cy='148.5' rx='1.8' ry='1.0' transform='rotate(11 49.3 148.5)' fill='#2a1c12'/><ellipse cx='84.1' cy='112.5' rx='2.2' ry='1.3' transform='rotate(14 84.1 112.5)' fill='#1f150e'/><ellipse cx='66.4' cy='40.4' rx='2.7' ry='2.2' transform='rotate(6 66.4 40.4)' fill='#3a2a1c'/><ellipse cx='124.6' cy='130.0' rx='2.4' ry='1.7' transform='rotate(20 124.6 130.0)' fill='#1f150e'/><ellipse cx='59.1' cy='63.2' rx='2.7' ry='1.6' transform='rotate(174 59.1 63.2)' fill='#1f150e'/><ellipse cx='73.9' cy='120.3' rx='2.1' ry='1.8' transform='rotate(16 73.9 120.3)' fill='#3a2a1c'/><ellipse cx='87.6' cy='66.1' rx='1.4' ry='0.8' transform='rotate(66 87.6 66.1)' fill='#2a1c12'/><ellipse cx='22.5' cy='71.3' rx='2.5' ry='2.0' transform='rotate(7 22.5 71.3)' fill='#1f150e'/><ellipse cx='86.2' cy='125.1' rx='1.6' ry='1.0' transform='rotate(11 86.2 125.1)' fill='#3a2a1c'/><ellipse cx='67.8' cy='52.3' rx='2.7' ry='2.1' transform='rotate(47 67.8 52.3)' fill='#3a2a1c'/><ellipse cx='119.4' cy='141.6' rx='1.4' ry='1.1' transform='rotate(107 119.4 141.6)' fill='#3a2a1c'/><ellipse cx='157.1' cy='24.0' rx='2.2' ry='1.3' transform='rotate(129 157.1 24.0)' fill='#2a1c12'/><ellipse cx='158.2' cy='68.0' rx='0.8' ry='0.6' transform='rotate(89 158.2 68.0)' fill='#2a1c12'/><ellipse cx='44.9' cy='125.0' rx='2.3' ry='2.0' transform='rotate(139 44.9 125.0)' fill='#3a2a1c'/><ellipse cx='52.7' cy='133.0' rx='2.5' ry='2.0' transform='rotate(107 52.7 133.0)' fill='#3a2a1c'/><ellipse cx='47.0' cy='118.1' rx='2.0' ry='1.2' transform='rotate(6 47.0 118.1)' fill='#3a2a1c'/><ellipse cx='98.1' cy='37.0' rx='1.0' ry='0.6' transform='rotate(13 98.1 37.0)' fill='#3a2a1c'/><ellipse cx='30.4' cy='28.2' rx='2.0' ry='1.6' transform='rotate(80 30.4 28.2)' fill='#1f150e'/><ellipse cx='37.5' cy='78.1' rx='2.6' ry='1.6' transform='rotate(97 37.5 78.1)' fill='#3a2a1c'/><ellipse cx='129.7' cy='121.8' rx='1.4' ry='0.9' transform='rotate(48 129.7 121.8)' fill='#2a1c12'/><ellipse cx='126.5' cy='42.3' rx='0.8' ry='0.5' transform='rotate(28 126.5 42.3)' fill='#3a2a1c'/><ellipse cx='45.7' cy='23.9' rx='1.6' ry='1.0' transform='rotate(95 45.7 23.9)' fill='#3a2a1c'/><ellipse cx='136.8' cy='104.5' rx='1.4' ry='0.8' transform='rotate(85 136.8 104.5)' fill='#1f150e'/><ellipse cx='141.6' cy='140.3' rx='1.1' ry='0.7' transform='rotate(21 141.6 140.3)' fill='#1f150e'/><ellipse cx='106.3' cy='128.4' rx='1.9' ry='1.1' transform='rotate(92 106.3 128.4)' fill='#1f150e'/><ellipse cx='84.0' cy='50.6' rx='1.3' ry='1.1' transform='rotate(19 84.0 50.6)' fill='#3a2a1c'/><ellipse cx='122.3' cy='62.9' rx='0.6' ry='0.4' transform='rotate(8 122.3 62.9)' fill='#2a1c12'/><ellipse cx='23.6' cy='115.3' rx='2.6' ry='2.2' transform='rotate(147 23.6 115.3)' fill='#2a1c12'/><ellipse cx='117.7' cy='40.4' rx='0.9' ry='0.5' transform='rotate(143 117.7 40.4)' fill='#3a2a1c'/><ellipse cx='89.1' cy='70.9' rx='1.3' ry='1.0' transform='rotate(28 89.1 70.9)' fill='#3a2a1c'/><ellipse cx='31.4' cy='37.4' rx='2.3' ry='1.6' transform='rotate(51 31.4 37.4)' fill='#2a1c12'/><ellipse cx='79.4' cy='22.0' rx='2.3' ry='2.0' transform='rotate(75 79.4 22.0)' fill='#1f150e'/><ellipse cx='145.0' cy='151.5' rx='1.5' ry='0.9' transform='rotate(131 145.0 151.5)' fill='#1f150e'/><ellipse cx='156.5' cy='74.5' rx='0.7' ry='0.4' transform='rotate(16 156.5 74.5)' fill='#3a2a1c'/><ellipse cx='147.8' cy='78.1' rx='0.7' ry='0.4' transform='rotate(99 147.8 78.1)' fill='#3a2a1c'/><ellipse cx='136.6' cy='69.4' rx='1.1' ry='0.9' transform='rotate(133 136.6 69.4)' fill='#1f150e'/><ellipse cx='39.4' cy='53.8' rx='2.0' ry='1.7' transform='rotate(20 39.4 53.8)' fill='#2a1c12'/><ellipse cx='128.8' cy='123.5' rx='2.1' ry='1.4' transform='rotate(151 128.8 123.5)' fill='#1f150e'/><ellipse cx='161.4' cy='81.1' rx='1.1' ry='0.9' transform='rotate(70 161.4 81.1)' fill='#3a2a1c'/><ellipse cx='109.2' cy='128.0' rx='1.8' ry='1.5' transform='rotate(40 109.2 128.0)' fill='#2a1c12'/><ellipse cx='108.4' cy='41.9' rx='1.0' ry='0.7' transform='rotate(8 108.4 41.9)' fill='#3a2a1c'/><ellipse cx='41.0' cy='64.2' rx='1.4' ry='1.2' transform='rotate(147 41.0 64.2)' fill='#1f150e'/><ellipse cx='24.0' cy='92.0' rx='2.4' ry='1.3' transform='rotate(151 24.0 92.0)' fill='#1f150e'/><ellipse cx='75.3' cy='77.4' rx='2.5' ry='2.1' transform='rotate(117 75.3 77.4)' fill='#2a1c12'/><ellipse cx='103.6' cy='73.3' rx='1.2' ry='0.8' transform='rotate(79 103.6 73.3)' fill='#1f150e'/><ellipse cx='18.5' cy='150.1' rx='1.9' ry='1.3' transform='rotate(111 18.5 150.1)' fill='#2a1c12'/><ellipse cx='141.0' cy='126.0' rx='1.6' ry='0.9' transform='rotate(65 141.0 126.0)' fill='#2a1c12'/><ellipse cx='31.5' cy='75.5' rx='2.0' ry='1.1' transform='rotate(115 31.5 75.5)' fill='#1f150e'/><ellipse cx='153.6' cy='58.0' rx='1.2' ry='0.7' transform='rotate(135 153.6 58.0)' fill='#2a1c12'/><ellipse cx='114.0' cy='122.4' rx='1.0' ry='0.6' transform='rotate(111 114.0 122.4)' fill='#3a2a1c'/><ellipse cx='137.8' cy='41.5' rx='1.4' ry='1.0' transform='rotate(172 137.8 41.5)' fill='#1f150e'/><ellipse cx='118.9' cy='113.8' rx='1.3' ry='1.1' transform='rotate(110 118.9 113.8)' fill='#2a1c12'/><ellipse cx='41.3' cy='137.8' rx='1.6' ry='1.3' transform='rotate(26 41.3 137.8)' fill='#3a2a1c'/><ellipse cx='159.8' cy='80.8' rx='1.1' ry='0.8' transform='rotate(43 159.8 80.8)' fill='#2a1c12'/><ellipse cx='23.4' cy='39.9' rx='1.4' ry='1.2' transform='rotate(122 23.4 39.9)' fill='#2a1c12'/><ellipse cx='42.8' cy='122.5' rx='1.3' ry='1.0' transform='rotate(115 42.8 122.5)' fill='#2a1c12'/><ellipse cx='160.0' cy='77.1' rx='1.7' ry='1.4' transform='rotate(161 160.0 77.1)' fill='#2a1c12'/><ellipse cx='164.0' cy='101.3' rx='1.6' ry='1.3' transform='rotate(48 164.0 101.3)' fill='#2a1c12'/><ellipse cx='102.9' cy='64.4' rx='1.2' ry='0.9' transform='rotate(32 102.9 64.4)' fill='#3a2a1c'/><ellipse cx='158.8' cy='55.6' rx='1.0' ry='0.7' transform='rotate(174 158.8 55.6)' fill='#3a2a1c'/><ellipse cx='154.5' cy='137.7' rx='2.0' ry='1.6' transform='rotate(40 154.5 137.7)' fill='#2a1c12'/><ellipse cx='108.6' cy='74.2' rx='1.0' ry='0.9' transform='rotate(24 108.6 74.2)' fill='#1f150e'/><ellipse cx='108.0' cy='21.2' rx='1.1' ry='0.8' transform='rotate(55 108.0 21.2)' fill='#3a2a1c'/><ellipse cx='70.5' cy='45.7' rx='2.1' ry='1.6' transform='rotate(37 70.5 45.7)' fill='#3a2a1c'/><ellipse cx='139.8' cy='36.7' rx='0.6' ry='0.5' transform='rotate(127 139.8 36.7)' fill='#2a1c12'/><ellipse cx='32.1' cy='102.4' rx='2.6' ry='2.1' transform='rotate(72 32.1 102.4)' fill='#2a1c12'/><ellipse cx='160.2' cy='22.7' rx='2.1' ry='1.9' transform='rotate(107 160.2 22.7)' fill='#3a2a1c'/><ellipse cx='83.2' cy='143.4' rx='3.0' ry='1.9' transform='rotate(163 83.2 143.4)' fill='#1f150e'/><ellipse cx='27.0' cy='18.5' rx='1.4' ry='0.9' transform='rotate(164 27.0 18.5)' fill='#1f150e'/><ellipse cx='19.8' cy='90.5' rx='2.7' ry='1.6' transform='rotate(36 19.8 90.5)' fill='#3a2a1c'/><ellipse cx='112.5' cy='103.7' rx='0.9' ry='0.7' transform='rotate(92 112.5 103.7)' fill='#1f150e'/><ellipse cx='62.1' cy='21.6' rx='2.6' ry='2.1' transform='rotate(129 62.1 21.6)' fill='#1f150e'/><ellipse cx='73.1' cy='74.8' rx='2.6' ry='1.5' transform='rotate(118 73.1 74.8)' fill='#1f150e'/><ellipse cx='51.2' cy='29.4' rx='1.5' ry='0.9' transform='rotate(60 51.2 29.4)' fill='#3a2a1c'/><ellipse cx='154.0' cy='144.2' rx='1.4' ry='0.8' transform='rotate(114 154.0 144.2)' fill='#3a2a1c'/><ellipse cx='82.1' cy='123.0' rx='2.6' ry='1.7' transform='rotate(116 82.1 123.0)' fill='#1f150e'/><ellipse cx='30.6' cy='84.5' rx='1.4' ry='1.2' transform='rotate(152 30.6 84.5)' fill='#1f150e'/><ellipse cx='156.9' cy='117.2' rx='1.5' ry='1.3' transform='rotate(59 156.9 117.2)' fill='#1f150e'/><ellipse cx='73.8' cy='131.7' rx='3.4' ry='3.1' transform='rotate(151 73.8 131.7)' fill='#3a2a1c'/><ellipse cx='87.0' cy='130.0' rx='3.0' ry='2.5' transform='rotate(79 87.0 130.0)' fill='#3a2a1c'/><ellipse cx='52.4' cy='136.2' rx='3.2' ry='2.2' transform='rotate(105 52.4 136.2)' fill='#3a2a1c'/><ellipse cx='151.9' cy='34.8' rx='0.6' ry='0.4' transform='rotate(167 151.9 34.8)' fill='#2a1c12'/><ellipse cx='161.7' cy='111.0' rx='1.0' ry='0.6' transform='rotate(116 161.7 111.0)' fill='#1f150e'/><ellipse cx='120.5' cy='115.9' rx='1.1' ry='0.8' transform='rotate(65 120.5 115.9)' fill='#3a2a1c'/><ellipse cx='149.0' cy='24.0' rx='2.2' ry='1.9' transform='rotate(170 149.0 24.0)' fill='#1f150e'/><ellipse cx='54.2' cy='42.8' rx='1.2' ry='1.1' transform='rotate(164 54.2 42.8)' fill='#3a2a1c'/><ellipse cx='30.9' cy='117.9' rx='2.2' ry='1.6' transform='rotate(24 30.9 117.9)' fill='#3a2a1c'/><ellipse cx='48.1' cy='58.7' rx='1.8' ry='1.0' transform='rotate(46 48.1 58.7)' fill='#2a1c12'/><ellipse cx='25.1' cy='119.1' rx='2.6' ry='2.1' transform='rotate(108 25.1 119.1)' fill='#2a1c12'/><ellipse cx='143.2' cy='99.7' rx='0.6' ry='0.4' transform='rotate(79 143.2 99.7)' fill='#1f150e'/><ellipse cx='69.0' cy='111.5' rx='2.6' ry='1.6' transform='rotate(155 69.0 111.5)' fill='#1f150e'/><ellipse cx='102.5' cy='54.3' rx='1.0' ry='0.7' transform='rotate(52 102.5 54.3)' fill='#1f150e'/><ellipse cx='18.6' cy='82.2' rx='1.9' ry='1.6' transform='rotate(33 18.6 82.2)' fill='#2a1c12'/><ellipse cx='105.1' cy='146.1' rx='2.6' ry='1.9' transform='rotate(29 105.1 146.1)' fill='#1f150e'/><ellipse cx='155.9' cy='46.7' rx='0.7' ry='0.6' transform='rotate(138 155.9 46.7)' fill='#2a1c12'/><ellipse cx='133.8' cy='110.5' rx='2.1' ry='1.6' transform='rotate(64 133.8 110.5)' fill='#2a1c12'/><ellipse cx='154.5' cy='137.2' rx='2.0' ry='1.4' transform='rotate(116 154.5 137.2)' fill='#2a1c12'/><ellipse cx='48.3' cy='51.1' rx='2.6' ry='1.9' transform='rotate(68 48.3 51.1)' fill='#3a2a1c'/><ellipse cx='52.3' cy='78.1' rx='2.0' ry='1.6' transform='rotate(136 52.3 78.1)' fill='#3a2a1c'/><ellipse cx='23.0' cy='94.7' rx='2.0' ry='1.7' transform='rotate(81 23.0 94.7)' fill='#3a2a1c'/><ellipse cx='127.1' cy='38.2' rx='1.0' ry='0.8' transform='rotate(104 127.1 38.2)' fill='#1f150e'/><ellipse cx='67.1' cy='103.1' rx='3.0' ry='2.2' transform='rotate(48 67.1 103.1)' fill='#3a2a1c'/><ellipse cx='139.5' cy='99.6' rx='1.2' ry='1.1' transform='rotate(130 139.5 99.6)' fill='#3a2a1c'/><ellipse cx='94.8' cy='37.0' rx='0.9' ry='0.5' transform='rotate(176 94.8 37.0)' fill='#3a2a1c'/><ellipse cx='164.3' cy='37.6' rx='1.9' ry='1.2' transform='rotate(27 164.3 37.6)' fill='#1f150e'/><ellipse cx='134.8' cy='115.5' rx='1.6' ry='1.0' transform='rotate(115 134.8 115.5)' fill='#1f150e'/><ellipse cx='59.3' cy='136.3' rx='2.5' ry='1.4' transform='rotate(154 59.3 136.3)' fill='#2a1c12'/><ellipse cx='119.9' cy='83.6' rx='1.1' ry='0.8' transform='rotate(26 119.9 83.6)' fill='#3a2a1c'/><ellipse cx='126.5' cy='15.8' rx='1.3' ry='1.1' transform='rotate(126 126.5 15.8)' fill='#3a2a1c'/><ellipse cx='128.1' cy='72.7' rx='0.8' ry='0.6' transform='rotate(158 128.1 72.7)' fill='#3a2a1c'/><ellipse cx='120.9' cy='131.8' rx='2.0' ry='1.5' transform='rotate(82 120.9 131.8)' fill='#2a1c12'/><ellipse cx='56.2' cy='111.0' rx='3.4' ry='2.1' transform='rotate(72 56.2 111.0)' fill='#3a2a1c'/><ellipse cx='110.6' cy='49.3' rx='1.0' ry='0.7' transform='rotate(112 110.6 49.3)' fill='#2a1c12'/><ellipse cx='94.2' cy='105.6' rx='3.3' ry='2.9' transform='rotate(59 94.2 105.6)' fill='#1f150e'/><ellipse cx='75.1' cy='82.1' rx='2.7' ry='1.5' transform='rotate(98 75.1 82.1)' fill='#1f150e'/><ellipse cx='123.3' cy='145.3' rx='1.3' ry='0.9' transform='rotate(152 123.3 145.3)' fill='#2a1c12'/><ellipse cx='97.5' cy='113.3' rx='2.6' ry='2.0' transform='rotate(149 97.5 113.3)' fill='#3a2a1c'/><ellipse cx='68.4' cy='116.7' rx='2.5' ry='2.2' transform='rotate(33 68.4 116.7)' fill='#3a2a1c'/><ellipse cx='130.1' cy='31.8' rx='1.4' ry='1.0' transform='rotate(10 130.1 31.8)' fill='#2a1c12'/><ellipse cx='74.1' cy='23.4' rx='1.3' ry='1.1' transform='rotate(113 74.1 23.4)' fill='#3a2a1c'/><ellipse cx='69.8' cy='51.3' rx='1.5' ry='1.2' transform='rotate(169 69.8 51.3)' fill='#3a2a1c'/><ellipse cx='160.8' cy='151.2' rx='2.3' ry='1.7' transform='rotate(30 160.8 151.2)' fill='#1f150e'/><ellipse cx='137.0' cy='101.9' rx='1.0' ry='0.7' transform='rotate(41 137.0 101.9)' fill='#1f150e'/><ellipse cx='69.9' cy='102.5' rx='3.2' ry='2.7' transform='rotate(84 69.9 102.5)' fill='#2a1c12'/><ellipse cx='129.7' cy='104.0' rx='1.3' ry='0.9' transform='rotate(141 129.7 104.0)' fill='#1f150e'/><ellipse cx='57.3' cy='66.5' rx='1.6' ry='1.1' transform='rotate(33 57.3 66.5)' fill='#1f150e'/><ellipse cx='136.4' cy='124.5' rx='1.5' ry='1.2' transform='rotate(58 136.4 124.5)' fill='#2a1c12'/><ellipse cx='81.0' cy='102.3' rx='2.9' ry='2.0' transform='rotate(167 81.0 102.3)' fill='#2a1c12'/><ellipse cx='26.4' cy='128.4' rx='2.6' ry='2.2' transform='rotate(25 26.4 128.4)' fill='#2a1c12'/><ellipse cx='111.1' cy='17.1' rx='1.0' ry='0.9' transform='rotate(118 111.1 17.1)' fill='#2a1c12'/><ellipse cx='107.4' cy='94.3' rx='1.3' ry='0.8' transform='rotate(81 107.4 94.3)' fill='#1f150e'/><ellipse cx='48.7' cy='70.1' rx='2.0' ry='1.5' transform='rotate(124 48.7 70.1)' fill='#1f150e'/><ellipse cx='116.3' cy='137.5' rx='2.1' ry='1.8' transform='rotate(36 116.3 137.5)' fill='#3a2a1c'/><ellipse cx='49.3' cy='25.8' rx='2.5' ry='2.0' transform='rotate(21 49.3 25.8)' fill='#1f150e'/><ellipse cx='56.9' cy='47.1' rx='1.4' ry='1.0' transform='rotate(11 56.9 47.1)' fill='#2a1c12'/><ellipse cx='151.1' cy='111.0' rx='1.3' ry='0.8' transform='rotate(108 151.1 111.0)' fill='#3a2a1c'/><ellipse cx='19.0' cy='130.2' rx='1.9' ry='1.4' transform='rotate(120 19.0 130.2)' fill='#2a1c12'/><ellipse cx='73.1' cy='72.4' rx='2.7' ry='1.6' transform='rotate(115 73.1 72.4)' fill='#3a2a1c'/><ellipse cx='113.0' cy='17.8' rx='1.1' ry='0.9' transform='rotate(180 113.0 17.8)' fill='#1f150e'/><ellipse cx='93.1' cy='81.4' rx='1.4' ry='0.8' transform='rotate(129 93.1 81.4)' fill='#3a2a1c'/><ellipse cx='36.7' cy='27.9' rx='2.2' ry='1.5' transform='rotate(140 36.7 27.9)' fill='#3a2a1c'/><ellipse cx='131.3' cy='43.9' rx='1.0' ry='0.7' transform='rotate(100 131.3 43.9)' fill='#2a1c12'/><ellipse cx='61.1' cy='128.4' rx='2.3' ry='1.7' transform='rotate(49 61.1 128.4)' fill='#3a2a1c'/><ellipse cx='68.7' cy='42.9' rx='1.9' ry='1.1' transform='rotate(35 68.7 42.9)' fill='#3a2a1c'/><ellipse cx='62.0' cy='95.3' rx='2.8' ry='2.3' transform='rotate(7 62.0 95.3)' fill='#3a2a1c'/><ellipse cx='99.5' cy='70.6' rx='1.1' ry='0.7' transform='rotate(20 99.5 70.6)' fill='#1f150e'/><ellipse cx='45.9' cy='141.2' rx='2.8' ry='2.2' transform='rotate(142 45.9 141.2)' fill='#3a2a1c'/><ellipse cx='107.9' cy='99.5' rx='2.8' ry='2.2' transform='rotate(107 107.9 99.5)' fill='#3a2a1c'/><ellipse cx='30.2' cy='20.4' rx='2.2' ry='1.7' transform='rotate(31 30.2 20.4)' fill='#3a2a1c'/><ellipse cx='44.7' cy='20.1' rx='2.4' ry='2.1' transform='rotate(118 44.7 20.1)' fill='#2a1c12'/><ellipse cx='146.2' cy='34.0' rx='0.9' ry='0.7' transform='rotate(155 146.2 34.0)' fill='#1f150e'/><ellipse cx='80.0' cy='58.6' rx='1.0' ry='0.7' transform='rotate(168 80.0 58.6)' fill='#1f150e'/><ellipse cx='91.2' cy='86.5' rx='1.3' ry='1.1' transform='rotate(76 91.2 86.5)' fill='#3a2a1c'/><ellipse cx='153.0' cy='76.2' rx='0.6' ry='0.4' transform='rotate(107 153.0 76.2)' fill='#3a2a1c'/><ellipse cx='162.2' cy='80.1' rx='1.6' ry='0.9' transform='rotate(116 162.2 80.1)' fill='#1f150e'/><ellipse cx='149.7' cy='100.9' rx='1.0' ry='0.5' transform='rotate(120 149.7 100.9)' fill='#1f150e'/><ellipse cx='50.1' cy='31.6' rx='1.9' ry='1.2' transform='rotate(102 50.1 31.6)' fill='#2a1c12'/><ellipse cx='125.8' cy='40.7' rx='0.6' ry='0.5' transform='rotate(128 125.8 40.7)' fill='#1f150e'/><ellipse cx='125.3' cy='26.5' rx='1.9' ry='1.5' transform='rotate(83 125.3 26.5)' fill='#2a1c12'/><ellipse cx='152.3' cy='22.2' rx='1.0' ry='0.6' transform='rotate(159 152.3 22.2)' fill='#3a2a1c'/><ellipse cx='138.1' cy='25.9' rx='1.4' ry='1.2' transform='rotate(30 138.1 25.9)' fill='#2a1c12'/><ellipse cx='107.5' cy='58.3' rx='1.4' ry='1.1' transform='rotate(85 107.5 58.3)' fill='#1f150e'/><ellipse cx='39.3' cy='124.2' rx='1.7' ry='1.3' transform='rotate(113 39.3 124.2)' fill='#2a1c12'/><ellipse cx='88.1' cy='121.6' rx='2.5' ry='1.6' transform='rotate(136 88.1 121.6)' fill='#2a1c12'/><ellipse cx='61.0' cy='23.3' rx='2.7' ry='2.2' transform='rotate(149 61.0 23.3)' fill='#2a1c12'/><ellipse cx='145.8' cy='114.4' rx='1.0' ry='0.6' transform='rotate(150 145.8 114.4)' fill='#3a2a1c'/><ellipse cx='81.0' cy='136.7' rx='2.3' ry='1.8' transform='rotate(108 81.0 136.7)' fill='#1f150e'/><ellipse cx='136.7' cy='53.8' rx='0.6' ry='0.4' transform='rotate(76 136.7 53.8)' fill='#3a2a1c'/><ellipse cx='153.3' cy='119.6' rx='2.1' ry='1.4' transform='rotate(25 153.3 119.6)' fill='#3a2a1c'/><ellipse cx='39.6' cy='148.6' rx='2.4' ry='1.8' transform='rotate(140 39.6 148.6)' fill='#2a1c12'/><ellipse cx='69.0' cy='26.7' rx='2.0' ry='1.7' transform='rotate(36 69.0 26.7)' fill='#3a2a1c'/><ellipse cx='155.0' cy='47.1' rx='1.1' ry='0.9' transform='rotate(84 155.0 47.1)' fill='#1f150e'/><ellipse cx='154.1' cy='95.3' rx='0.6' ry='0.4' transform='rotate(97 154.1 95.3)' fill='#3a2a1c'/><ellipse cx='136.6' cy='120.8' rx='1.3' ry='1.0' transform='rotate(161 136.6 120.8)' fill='#3a2a1c'/><ellipse cx='65.2' cy='84.3' rx='1.5' ry='0.9' transform='rotate(17 65.2 84.3)' fill='#3a2a1c'/><ellipse cx='60.6' cy='94.2' rx='1.7' ry='1.4' transform='rotate(154 60.6 94.2)' fill='#1f150e'/><ellipse cx='24.6' cy='151.6' rx='1.8' ry='1.0' transform='rotate(114 24.6 151.6)' fill='#1f150e'/><ellipse cx='41.0' cy='96.8' rx='1.7' ry='1.2' transform='rotate(4 41.0 96.8)' fill='#1f150e'/><ellipse cx='48.1' cy='134.3' rx='2.7' ry='2.0' transform='rotate(38 48.1 134.3)' fill='#2a1c12'/><ellipse cx='80.6' cy='144.7' rx='3.1' ry='2.6' transform='rotate(173 80.6 144.7)' fill='#2a1c12'/><ellipse cx='142.0' cy='61.4' rx='1.4' ry='1.0' transform='rotate(5 142.0 61.4)' fill='#1f150e'/><ellipse cx='99.9' cy='134.3' rx='2.5' ry='2.2' transform='rotate(164 99.9 134.3)' fill='#1f150e'/><ellipse cx='144.9' cy='102.7' rx='1.4' ry='1.1' transform='rotate(16 144.9 102.7)' fill='#2a1c12'/><ellipse cx='101.0' cy='102.8' rx='3.5' ry='2.8' transform='rotate(71 101.0 102.8)' fill='#2a1c12'/><ellipse cx='142.9' cy='65.8' rx='0.8' ry='0.6' transform='rotate(31 142.9 65.8)' fill='#2a1c12'/><ellipse cx='156.4' cy='23.1' rx='1.8' ry='1.0' transform='rotate(165 156.4 23.1)' fill='#2a1c12'/><ellipse cx='133.6' cy='112.2' rx='1.9' ry='1.7' transform='rotate(10 133.6 112.2)' fill='#1f150e'/><ellipse cx='64.7' cy='15.8' rx='1.5' ry='1.2' transform='rotate(106 64.7 15.8)' fill='#2a1c12'/><ellipse cx='129.4' cy='29.4' rx='1.5' ry='0.9' transform='rotate(22 129.4 29.4)' fill='#2a1c12'/><ellipse cx='73.8' cy='75.5' rx='2.5' ry='2.1' transform='rotate(161 73.8 75.5)' fill='#2a1c12'/><ellipse cx='123.4' cy='41.7' rx='0.6' ry='0.6' transform='rotate(40 123.4 41.7)' fill='#3a2a1c'/><ellipse cx='145.4' cy='136.8' rx='1.2' ry='0.8' transform='rotate(17 145.4 136.8)' fill='#2a1c12'/><ellipse cx='141.8' cy='101.1' rx='1.0' ry='0.7' transform='rotate(148 141.8 101.1)' fill='#2a1c12'/><ellipse cx='35.0' cy='65.1' rx='1.7' ry='1.4' transform='rotate(32 35.0 65.1)' fill='#2a1c12'/><ellipse cx='99.3' cy='34.8' rx='1.3' ry='0.9' transform='rotate(74 99.3 34.8)' fill='#1f150e'/><ellipse cx='21.7' cy='93.2' rx='1.6' ry='1.4' transform='rotate(47 21.7 93.2)' fill='#1f150e'/><ellipse cx='64.8' cy='138.7' rx='1.7' ry='1.6' transform='rotate(10 64.8 138.7)' fill='#3a2a1c'/><ellipse cx='154.0' cy='91.7' rx='1.3' ry='0.8' transform='rotate(136 154.0 91.7)' fill='#2a1c12'/><ellipse cx='81.5' cy='50.8' rx='0.8' ry='0.5' transform='rotate(70 81.5 50.8)' fill='#2a1c12'/><ellipse cx='149.7' cy='22.9' rx='2.0' ry='1.3' transform='rotate(176 149.7 22.9)' fill='#1f150e'/><ellipse cx='83.0' cy='84.6' rx='1.0' ry='0.7' transform='rotate(142 83.0 84.6)' fill='#3a2a1c'/><ellipse cx='60.1' cy='64.3' rx='1.2' ry='0.8' transform='rotate(50 60.1 64.3)' fill='#1f150e'/><ellipse cx='38.3' cy='39.7' rx='2.4' ry='1.9' transform='rotate(35 38.3 39.7)' fill='#1f150e'/><ellipse cx='139.9' cy='136.8' rx='2.0' ry='1.7' transform='rotate(32 139.9 136.8)' fill='#1f150e'/><ellipse cx='108.0' cy='112.0' rx='3.2' ry='2.4' transform='rotate(36 108.0 112.0)' fill='#1f150e'/><ellipse cx='119.8' cy='86.2' rx='1.3' ry='1.1' transform='rotate(93 119.8 86.2)' fill='#2a1c12'/><ellipse cx='67.3' cy='130.3' rx='3.3' ry='2.4' transform='rotate(3 67.3 130.3)' fill='#2a1c12'/><ellipse cx='37.6' cy='106.2' rx='1.5' ry='1.2' transform='rotate(177 37.6 106.2)' fill='#1f150e'/><ellipse cx='42.0' cy='65.8' rx='2.1' ry='1.2' transform='rotate(94 42.0 65.8)' fill='#2a1c12'/><ellipse cx='160.4' cy='24.8' rx='1.5' ry='1.0' transform='rotate(149 160.4 24.8)' fill='#2a1c12'/><ellipse cx='132.5' cy='133.9' rx='1.8' ry='1.6' transform='rotate(52 132.5 133.9)' fill='#1f150e'/><ellipse cx='158.2' cy='82.8' rx='1.0' ry='0.8' transform='rotate(97 158.2 82.8)' fill='#1f150e'/><ellipse cx='53.8' cy='27.1' rx='2.1' ry='1.3' transform='rotate(56 53.8 27.1)' fill='#3a2a1c'/><ellipse cx='138.1' cy='19.1' rx='1.1' ry='0.9' transform='rotate(35 138.1 19.1)' fill='#1f150e'/><ellipse cx='141.1' cy='102.2' rx='1.0' ry='0.6' transform='rotate(80 141.1 102.2)' fill='#2a1c12'/><ellipse cx='145.8' cy='113.2' rx='1.1' ry='0.6' transform='rotate(89 145.8 113.2)' fill='#3a2a1c'/><ellipse cx='129.9' cy='30.1' rx='0.7' ry='0.6' transform='rotate(97 129.9 30.1)' fill='#1f150e'/><ellipse cx='144.6' cy='35.2' rx='1.1' ry='0.9' transform='rotate(30 144.6 35.2)' fill='#1f150e'/><ellipse cx='155.8' cy='68.3' rx='1.0' ry='0.8' transform='rotate(95 155.8 68.3)' fill='#2a1c12'/><ellipse cx='160.7' cy='22.1' rx='1.5' ry='1.0' transform='rotate(151 160.7 22.1)' fill='#3a2a1c'/><ellipse cx='82.0' cy='149.4' rx='3.2' ry='2.8' transform='rotate(147 82.0 149.4)' fill='#3a2a1c'/><ellipse cx='25.9' cy='85.9' rx='2.7' ry='2.4' transform='rotate(45 25.9 85.9)' fill='#2a1c12'/><ellipse cx='115.5' cy='16.6' rx='1.2' ry='0.7' transform='rotate(58 115.5 16.6)' fill='#1f150e'/><ellipse cx='92.2' cy='17.9' rx='1.2' ry='1.1' transform='rotate(140 92.2 17.9)' fill='#2a1c12'/><ellipse cx='111.1' cy='125.9' rx='2.2' ry='1.9' transform='rotate(6 111.1 125.9)' fill='#3a2a1c'/><ellipse cx='109.3' cy='140.8' rx='2.8' ry='2.2' transform='rotate(145 109.3 140.8)' fill='#1f150e'/><ellipse cx='109.3' cy='49.3' rx='1.0' ry='0.7' transform='rotate(171 109.3 49.3)' fill='#2a1c12'/><ellipse cx='34.6' cy='62.6' rx='1.4' ry='0.8' transform='rotate(173 34.6 62.6)' fill='#3a2a1c'/><ellipse cx='150.5' cy='26.6' rx='1.8' ry='1.6' transform='rotate(79 150.5 26.6)' fill='#3a2a1c'/><ellipse cx='37.3' cy='55.2' rx='1.8' ry='1.2' transform='rotate(44 37.3 55.2)' fill='#1f150e'/><ellipse cx='126.8' cy='54.3' rx='1.0' ry='0.8' transform='rotate(40 126.8 54.3)' fill='#2a1c12'/><ellipse cx='47.6' cy='112.3' rx='2.5' ry='1.8' transform='rotate(110 47.6 112.3)' fill='#2a1c12'/><ellipse cx='138.4' cy='19.2' rx='1.5' ry='0.9' transform='rotate(98 138.4 19.2)' fill='#3a2a1c'/><ellipse cx='76.3' cy='141.6' rx='1.8' ry='1.6' transform='rotate(58 76.3 141.6)' fill='#2a1c12'/><ellipse cx='90.2' cy='54.0' rx='1.4' ry='0.9' transform='rotate(139 90.2 54.0)' fill='#1f150e'/><ellipse cx='99.0' cy='98.0' rx='2.2' ry='1.7' transform='rotate(93 99.0 98.0)' fill='#2a1c12'/><ellipse cx='70.1' cy='119.5' rx='2.6' ry='2.3' transform='rotate(122 70.1 119.5)' fill='#1f150e'/><ellipse cx='79.3' cy='106.5' rx='1.8' ry='1.1' transform='rotate(110 79.3 106.5)' fill='#2a1c12'/><ellipse cx='138.7' cy='85.9' rx='1.2' ry='1.0' transform='rotate(137 138.7 85.9)' fill='#2a1c12'/><ellipse cx='57.5' cy='101.4' rx='2.8' ry='2.3' transform='rotate(74 57.5 101.4)' fill='#1f150e'/><ellipse cx='18.6' cy='119.9' rx='2.1' ry='1.5' transform='rotate(173 18.6 119.9)' fill='#3a2a1c'/><ellipse cx='40.0' cy='131.4' rx='1.6' ry='1.2' transform='rotate(20 40.0 131.4)' fill='#2a1c12'/><ellipse cx='119.8' cy='54.5' rx='0.9' ry='0.6' transform='rotate(95 119.8 54.5)' fill='#3a2a1c'/><ellipse cx='74.5' cy='59.1' rx='2.4' ry='2.0' transform='rotate(90 74.5 59.1)' fill='#2a1c12'/><ellipse cx='62.1' cy='88.6' rx='2.4' ry='1.7' transform='rotate(68 62.1 88.6)' fill='#1f150e'/><ellipse cx='30.9' cy='141.1' rx='1.7' ry='1.4' transform='rotate(151 30.9 141.1)' fill='#2a1c12'/><ellipse cx='48.0' cy='73.4' rx='2.6' ry='1.4' transform='rotate(9 48.0 73.4)' fill='#3a2a1c'/><ellipse cx='149.7' cy='56.1' rx='1.1' ry='0.7' transform='rotate(112 149.7 56.1)' fill='#2a1c12'/><ellipse cx='94.1' cy='85.9' rx='1.2' ry='0.8' transform='rotate(64 94.1 85.9)' fill='#3a2a1c'/><ellipse cx='117.4' cy='77.1' rx='0.6' ry='0.3' transform='rotate(41 117.4 77.1)' fill='#2a1c12'/><ellipse cx='73.0' cy='69.9' rx='2.1' ry='1.5' transform='rotate(158 73.0 69.9)' fill='#2a1c12'/><ellipse cx='89.5' cy='75.3' rx='1.1' ry='1.0' transform='rotate(62 89.5 75.3)' fill='#3a2a1c'/><ellipse cx='127.7' cy='27.6' rx='1.5' ry='1.0' transform='rotate(14 127.7 27.6)' fill='#2a1c12'/><ellipse cx='93.4' cy='30.1' rx='1.4' ry='1.1' transform='rotate(148 93.4 30.1)' fill='#3a2a1c'/><ellipse cx='148.6' cy='72.7' rx='0.7' ry='0.5' transform='rotate(92 148.6 72.7)' fill='#3a2a1c'/><ellipse cx='149.3' cy='71.5' rx='0.7' ry='0.5' transform='rotate(19 149.3 71.5)' fill='#3a2a1c'/><ellipse cx='164.1' cy='102.2' rx='1.1' ry='0.7' transform='rotate(142 164.1 102.2)' fill='#2a1c12'/><ellipse cx='122.5' cy='90.8' rx='1.4' ry='0.9' transform='rotate(18 122.5 90.8)' fill='#1f150e'/><ellipse cx='116.2' cy='41.9' rx='1.0' ry='0.8' transform='rotate(48 116.2 41.9)' fill='#3a2a1c'/><ellipse cx='149.6' cy='85.5' rx='0.7' ry='0.4' transform='rotate(108 149.6 85.5)' fill='#1f150e'/><ellipse cx='41.0' cy='119.1' rx='1.3' ry='0.8' transform='rotate(31 41.0 119.1)' fill='#3a2a1c'/><ellipse cx='90.1' cy='79.0' rx='1.0' ry='0.8' transform='rotate(117 90.1 79.0)' fill='#3a2a1c'/><ellipse cx='131.3' cy='59.2' rx='1.2' ry='0.8' transform='rotate(30 131.3 59.2)' fill='#2a1c12'/><ellipse cx='110.4' cy='132.7' rx='2.3' ry='1.3' transform='rotate(34 110.4 132.7)' fill='#3a2a1c'/><ellipse cx='74.7' cy='22.5' rx='2.6' ry='1.9' transform='rotate(173 74.7 22.5)' fill='#2a1c12'/><ellipse cx='26.0' cy='47.6' rx='1.5' ry='0.9' transform='rotate(106 26.0 47.6)' fill='#1f150e'/><ellipse cx='64.3' cy='138.1' rx='3.2' ry='2.1' transform='rotate(108 64.3 138.1)' fill='#2a1c12'/><ellipse cx='162.0' cy='24.3' rx='1.9' ry='1.5' transform='rotate(105 162.0 24.3)' fill='#2a1c12'/><ellipse cx='63.4' cy='134.9' rx='2.5' ry='2.1' transform='rotate(44 63.4 134.9)' fill='#1f150e'/><ellipse cx='43.0' cy='66.9' rx='1.2' ry='1.0' transform='rotate(71 43.0 66.9)' fill='#2a1c12'/><ellipse cx='34.9' cy='88.1' rx='1.8' ry='1.2' transform='rotate(12 34.9 88.1)' fill='#1f150e'/><ellipse cx='80.1' cy='140.1' rx='2.7' ry='1.8' transform='rotate(84 80.1 140.1)' fill='#2a1c12'/><ellipse cx='52.9' cy='19.8' rx='2.2' ry='1.5' transform='rotate(28 52.9 19.8)' fill='#3a2a1c'/><ellipse cx='37.1' cy='41.9' rx='2.0' ry='1.7' transform='rotate(100 37.1 41.9)' fill='#2a1c12'/><ellipse cx='140.9' cy='125.3' rx='1.2' ry='0.8' transform='rotate(130 140.9 125.3)' fill='#2a1c12'/><ellipse cx='110.5' cy='94.6' rx='0.8' ry='0.6' transform='rotate(37 110.5 94.6)' fill='#2a1c12'/><ellipse cx='117.3' cy='144.1' rx='2.4' ry='1.8' transform='rotate(79 117.3 144.1)' fill='#2a1c12'/><ellipse cx='96.6' cy='70.4' rx='1.0' ry='0.6' transform='rotate(135 96.6 70.4)' fill='#3a2a1c'/><ellipse cx='93.4' cy='89.3' rx='0.8' ry='0.7' transform='rotate(69 93.4 89.3)' fill='#3a2a1c'/><ellipse cx='123.6' cy='34.9' rx='0.6' ry='0.5' transform='rotate(125 123.6 34.9)' fill='#1f150e'/><ellipse cx='65.2' cy='105.8' rx='1.7' ry='1.3' transform='rotate(65 65.2 105.8)' fill='#3a2a1c'/><ellipse cx='129.5' cy='41.4' rx='1.2' ry='0.7' transform='rotate(52 129.5 41.4)' fill='#3a2a1c'/><ellipse cx='76.6' cy='63.8' rx='2.5' ry='1.8' transform='rotate(113 76.6 63.8)' fill='#3a2a1c'/><ellipse cx='144.6' cy='33.1' rx='0.8' ry='0.5' transform='rotate(122 144.6 33.1)' fill='#3a2a1c'/><ellipse cx='119.6' cy='137.9' rx='1.0' ry='0.8' transform='rotate(83 119.6 137.9)' fill='#2a1c12'/><ellipse cx='69.8' cy='101.1' rx='1.9' ry='1.1' transform='rotate(164 69.8 101.1)' fill='#3a2a1c'/><ellipse cx='50.2' cy='107.8' rx='2.3' ry='1.8' transform='rotate(78 50.2 107.8)' fill='#2a1c12'/><ellipse cx='41.0' cy='116.2' rx='2.0' ry='1.6' transform='rotate(169 41.0 116.2)' fill='#3a2a1c'/><ellipse cx='141.4' cy='93.1' rx='1.2' ry='0.8' transform='rotate(78 141.4 93.1)' fill='#3a2a1c'/><ellipse cx='102.6' cy='143.2' rx='1.7' ry='1.4' transform='rotate(118 102.6 143.2)' fill='#1f150e'/><ellipse cx='146.6' cy='95.2' rx='1.2' ry='1.1' transform='rotate(123 146.6 95.2)' fill='#1f150e'/><ellipse cx='134.3' cy='43.8' rx='1.4' ry='1.1' transform='rotate(16 134.3 43.8)' fill='#3a2a1c'/><ellipse cx='127.4' cy='151.7' rx='1.9' ry='1.2' transform='rotate(95 127.4 151.7)' fill='#2a1c12'/><ellipse cx='157.1' cy='73.1' rx='1.4' ry='1.1' transform='rotate(133 157.1 73.1)' fill='#3a2a1c'/><ellipse cx='110.0' cy='84.7' rx='1.2' ry='0.7' transform='rotate(121 110.0 84.7)' fill='#1f150e'/><ellipse cx='90.0' cy='40.9' rx='1.4' ry='1.2' transform='rotate(101 90.0 40.9)' fill='#1f150e'/><ellipse cx='98.3' cy='147.8' rx='2.8' ry='2.1' transform='rotate(45 98.3 147.8)' fill='#1f150e'/><ellipse cx='42.7' cy='62.6' rx='1.3' ry='1.0' transform='rotate(25 42.7 62.6)' fill='#3a2a1c'/><ellipse cx='121.9' cy='106.8' rx='0.8' ry='0.5' transform='rotate(93 121.9 106.8)' fill='#2a1c12'/><ellipse cx='37.6' cy='102.8' rx='2.3' ry='1.4' transform='rotate(127 37.6 102.8)' fill='#3a2a1c'/><ellipse cx='100.8' cy='60.7' rx='1.3' ry='1.0' transform='rotate(137 100.8 60.7)' fill='#1f150e'/><ellipse cx='117.5' cy='36.2' rx='1.4' ry='1.2' transform='rotate(73 117.5 36.2)' fill='#1f150e'/><ellipse cx='34.8' cy='54.6' rx='1.7' ry='1.1' transform='rotate(11 34.8 54.6)' fill='#2a1c12'/><ellipse cx='62.7' cy='30.2' rx='1.6' ry='1.5' transform='rotate(29 62.7 30.2)' fill='#2a1c12'/><ellipse cx='86.9' cy='64.7' rx='0.7' ry='0.4' transform='rotate(2 86.9 64.7)' fill='#2a1c12'/><ellipse cx='30.3' cy='113.2' rx='2.7' ry='2.0' transform='rotate(20 30.3 113.2)' fill='#2a1c12'/><ellipse cx='158.6' cy='81.9' rx='1.3' ry='0.8' transform='rotate(65 158.6 81.9)' fill='#1f150e'/><ellipse cx='112.7' cy='101.0' rx='1.4' ry='1.1' transform='rotate(45 112.7 101.0)' fill='#1f150e'/><ellipse cx='29.5' cy='117.4' rx='1.2' ry='0.8' transform='rotate(26 29.5 117.4)' fill='#2a1c12'/><ellipse cx='45.3' cy='102.4' rx='3.3' ry='2.9' transform='rotate(30 45.3 102.4)' fill='#3a2a1c'/><ellipse cx='140.1' cy='116.7' rx='1.5' ry='0.9' transform='rotate(149 140.1 116.7)' fill='#2a1c12'/><ellipse cx='51.8' cy='33.7' rx='2.6' ry='2.2' transform='rotate(46 51.8 33.7)' fill='#1f150e'/><ellipse cx='24.1' cy='92.7' rx='2.2' ry='1.8' transform='rotate(127 24.1 92.7)' fill='#1f150e'/><ellipse cx='156.9' cy='82.7' rx='1.0' ry='0.6' transform='rotate(54 156.9 82.7)' fill='#3a2a1c'/><ellipse cx='110.1' cy='34.4' rx='0.8' ry='0.5' transform='rotate(115 110.1 34.4)' fill='#2a1c12'/><ellipse cx='31.2' cy='20.5' rx='1.9' ry='1.1' transform='rotate(130 31.2 20.5)' fill='#1f150e'/><ellipse cx='22.7' cy='98.7' rx='2.5' ry='1.8' transform='rotate(26 22.7 98.7)' fill='#1f150e'/><ellipse cx='115.3' cy='85.5' rx='1.0' ry='0.6' transform='rotate(79 115.3 85.5)' fill='#3a2a1c'/><ellipse cx='158.5' cy='39.2' rx='1.2' ry='0.8' transform='rotate(1 158.5 39.2)' fill='#3a2a1c'/><ellipse cx='117.3' cy='92.7' rx='1.0' ry='0.7' transform='rotate(93 117.3 92.7)' fill='#2a1c12'/><ellipse cx='160.8' cy='139.5' rx='2.2' ry='2.0' transform='rotate(173 160.8 139.5)' fill='#3a2a1c'/><ellipse cx='30.0' cy='125.9' rx='2.3' ry='1.5' transform='rotate(119 30.0 125.9)' fill='#3a2a1c'/><ellipse cx='102.0' cy='145.5' rx='2.5' ry='1.9' transform='rotate(54 102.0 145.5)' fill='#2a1c12'/><ellipse cx='96.0' cy='101.8' rx='3.3' ry='2.1' transform='rotate(133 96.0 101.8)' fill='#3a2a1c'/><ellipse cx='30.5' cy='105.5' rx='1.7' ry='1.3' transform='rotate(75 30.5 105.5)' fill='#3a2a1c'/><ellipse cx='53.3' cy='75.5' rx='1.6' ry='1.0' transform='rotate(174 53.3 75.5)' fill='#1f150e'/><ellipse cx='98.6' cy='30.4' rx='1.3' ry='0.8' transform='rotate(17 98.6 30.4)' fill='#3a2a1c'/><ellipse cx='116.5' cy='112.1' rx='1.3' ry='0.9' transform='rotate(97 116.5 112.1)' fill='#3a2a1c'/><ellipse cx='34.6' cy='85.3' rx='2.1' ry='1.2' transform='rotate(73 34.6 85.3)' fill='#1f150e'/><ellipse cx='135.6' cy='33.4' rx='1.0' ry='0.7' transform='rotate(151 135.6 33.4)' fill='#1f150e'/><ellipse cx='110.1' cy='146.6' rx='1.7' ry='1.2' transform='rotate(123 110.1 146.6)' fill='#3a2a1c'/><ellipse cx='43.2' cy='146.5' rx='2.1' ry='1.7' transform='rotate(25 43.2 146.5)' fill='#3a2a1c'/><ellipse cx='26.5' cy='47.5' rx='1.7' ry='1.0' transform='rotate(107 26.5 47.5)' fill='#1f150e'/><ellipse cx='85.6' cy='31.5' rx='0.7' ry='0.6' transform='rotate(16 85.6 31.5)' fill='#1f150e'/><ellipse cx='100.8' cy='140.7' rx='3.3' ry='2.0' transform='rotate(134 100.8 140.7)' fill='#2a1c12'/><ellipse cx='136.2' cy='115.8' rx='1.0' ry='0.6' transform='rotate(43 136.2 115.8)' fill='#3a2a1c'/><ellipse cx='126.4' cy='144.9' rx='2.0' ry='1.1' transform='rotate(109 126.4 144.9)' fill='#1f150e'/><ellipse cx='70.3' cy='59.8' rx='2.1' ry='1.2' transform='rotate(164 70.3 59.8)' fill='#1f150e'/><ellipse cx='55.4' cy='41.5' rx='1.9' ry='1.6' transform='rotate(105 55.4 41.5)' fill='#1f150e'/><ellipse cx='134.3' cy='81.9' rx='0.7' ry='0.4' transform='rotate(27 134.3 81.9)' fill='#2a1c12'/><ellipse cx='146.4' cy='106.7' rx='1.3' ry='1.0' transform='rotate(45 146.4 106.7)' fill='#3a2a1c'/><ellipse cx='129.9' cy='51.8' rx='1.0' ry='0.5' transform='rotate(179 129.9 51.8)' fill='#2a1c12'/><ellipse cx='91.8' cy='134.6' rx='3.2' ry='1.8' transform='rotate(33 91.8 134.6)' fill='#3a2a1c'/><ellipse cx='117.9' cy='68.8' rx='1.0' ry='0.6' transform='rotate(152 117.9 68.8)' fill='#2a1c12'/><ellipse cx='51.7' cy='146.2' rx='2.6' ry='1.7' transform='rotate(95 51.7 146.2)' fill='#2a1c12'/><ellipse cx='149.4' cy='95.7' rx='0.6' ry='0.4' transform='rotate(65 149.4 95.7)' fill='#2a1c12'/><ellipse cx='66.7' cy='79.2' rx='2.7' ry='1.8' transform='rotate(60 66.7 79.2)' fill='#2a1c12'/><ellipse cx='67.1' cy='17.8' rx='1.9' ry='1.7' transform='rotate(8 67.1 17.8)' fill='#1f150e'/><ellipse cx='124.9' cy='34.7' rx='0.9' ry='0.5' transform='rotate(178 124.9 34.7)' fill='#2a1c12'/><ellipse cx='101.6' cy='87.4' rx='1.4' ry='1.3' transform='rotate(6 101.6 87.4)' fill='#3a2a1c'/><ellipse cx='150.7' cy='28.0' rx='1.3' ry='0.9' transform='rotate(103 150.7 28.0)' fill='#1f150e'/><ellipse cx='71.3' cy='53.6' rx='2.4' ry='2.1' transform='rotate(169 71.3 53.6)' fill='#3a2a1c'/><ellipse cx='28.6' cy='146.9' rx='1.7' ry='1.2' transform='rotate(154 28.6 146.9)' fill='#1f150e'/><ellipse cx='69.5' cy='90.5' rx='1.8' ry='1.0' transform='rotate(61 69.5 90.5)' fill='#2a1c12'/><ellipse cx='147.9' cy='122.2' rx='1.7' ry='1.5' transform='rotate(146 147.9 122.2)' fill='#2a1c12'/><ellipse cx='40.2' cy='43.1' rx='2.6' ry='2.0' transform='rotate(73 40.2 43.1)' fill='#2a1c12'/><ellipse cx='101.6' cy='56.4' rx='0.7' ry='0.4' transform='rotate(54 101.6 56.4)' fill='#2a1c12'/><ellipse cx='55.1' cy='93.4' rx='2.2' ry='2.0' transform='rotate(13 55.1 93.4)' fill='#1f150e'/><ellipse cx='103.8' cy='26.0' rx='1.3' ry='0.9' transform='rotate(178 103.8 26.0)' fill='#2a1c12'/><ellipse cx='160.7' cy='109.6' rx='2.0' ry='1.8' transform='rotate(151 160.7 109.6)' fill='#2a1c12'/><ellipse cx='150.2' cy='52.8' rx='0.8' ry='0.5' transform='rotate(30 150.2 52.8)' fill='#2a1c12'/><ellipse cx='52.8' cy='17.7' rx='1.2' ry='0.9' transform='rotate(161 52.8 17.7)' fill='#2a1c12'/><ellipse cx='145.0' cy='103.8' rx='0.8' ry='0.6' transform='rotate(173 145.0 103.8)' fill='#3a2a1c'/><ellipse cx='25.1' cy='25.1' rx='2.5' ry='1.9' transform='rotate(129 25.1 25.1)' fill='#1f150e'/><ellipse cx='45.7' cy='88.6' rx='2.6' ry='2.0' transform='rotate(166 45.7 88.6)' fill='#1f150e'/><ellipse cx='65.3' cy='133.9' rx='1.6' ry='1.1' transform='rotate(110 65.3 133.9)' fill='#2a1c12'/><ellipse cx='43.7' cy='133.3' rx='2.4' ry='1.4' transform='rotate(110 43.7 133.3)' fill='#2a1c12'/><ellipse cx='163.2' cy='69.7' rx='2.3' ry='2.0' transform='rotate(5 163.2 69.7)' fill='#2a1c12'/><ellipse cx='100.9' cy='150.3' rx='1.6' ry='1.2' transform='rotate(130 100.9 150.3)' fill='#2a1c12'/><ellipse cx='41.0' cy='17.5' rx='1.5' ry='1.1' transform='rotate(151 41.0 17.5)' fill='#2a1c12'/><ellipse cx='137.7' cy='73.0' rx='1.1' ry='0.8' transform='rotate(100 137.7 73.0)' fill='#3a2a1c'/><ellipse cx='162.3' cy='93.8' rx='1.3' ry='1.0' transform='rotate(146 162.3 93.8)' fill='#2a1c12'/><ellipse cx='130.2' cy='121.3' rx='1.4' ry='1.2' transform='rotate(176 130.2 121.3)' fill='#2a1c12'/><ellipse cx='100.2' cy='64.5' rx='1.0' ry='0.7' transform='rotate(46 100.2 64.5)' fill='#3a2a1c'/><ellipse cx='87.9' cy='104.8' rx='3.1' ry='2.1' transform='rotate(178 87.9 104.8)' fill='#1f150e'/><ellipse cx='76.9' cy='149.1' rx='3.5' ry='2.7' transform='rotate(22 76.9 149.1)' fill='#3a2a1c'/><ellipse cx='91.8' cy='91.1' rx='0.8' ry='0.7' transform='rotate(66 91.8 91.1)' fill='#1f150e'/><ellipse cx='150.7' cy='134.3' rx='2.2' ry='1.8' transform='rotate(95 150.7 134.3)' fill='#2a1c12'/><ellipse cx='132.4' cy='48.2' rx='1.4' ry='1.0' transform='rotate(115 132.4 48.2)' fill='#2a1c12'/><ellipse cx='150.5' cy='68.3' rx='0.8' ry='0.6' transform='rotate(5 150.5 68.3)' fill='#3a2a1c'/><ellipse cx='125.8' cy='24.0' rx='1.9' ry='1.3' transform='rotate(156 125.8 24.0)' fill='#1f150e'/><ellipse cx='51.5' cy='66.5' rx='2.6' ry='1.8' transform='rotate(118 51.5 66.5)' fill='#1f150e'/><ellipse cx='22.5' cy='17.8' rx='2.3' ry='1.5' transform='rotate(64 22.5 17.8)' fill='#2a1c12'/><ellipse cx='129.6' cy='103.1' rx='0.9' ry='0.8' transform='rotate(39 129.6 103.1)' fill='#3a2a1c'/><ellipse cx='134.3' cy='80.4' rx='1.4' ry='1.1' transform='rotate(172 134.3 80.4)' fill='#1f150e'/><ellipse cx='139.0' cy='53.7' rx='0.9' ry='0.6' transform='rotate(160 139.0 53.7)' fill='#1f150e'/><ellipse cx='65.0' cy='98.6' rx='3.5' ry='2.2' transform='rotate(9 65.0 98.6)' fill='#1f150e'/><ellipse cx='143.1' cy='115.8' rx='1.1' ry='0.9' transform='rotate(79 143.1 115.8)' fill='#2a1c12'/><ellipse cx='145.0' cy='151.3' rx='1.4' ry='0.8' transform='rotate(20 145.0 151.3)' fill='#1f150e'/><ellipse cx='37.6' cy='56.5' rx='2.0' ry='1.3' transform='rotate(135 37.6 56.5)' fill='#2a1c12'/><ellipse cx='118.4' cy='27.4' rx='1.5' ry='1.3' transform='rotate(129 118.4 27.4)' fill='#2a1c12'/><ellipse cx='162.0' cy='19.5' rx='1.3' ry='1.1' transform='rotate(124 162.0 19.5)' fill='#1f150e'/><ellipse cx='37.8' cy='96.5' rx='2.1' ry='1.6' transform='rotate(131 37.8 96.5)' fill='#1f150e'/><ellipse cx='163.6' cy='58.4' rx='2.2' ry='1.3' transform='rotate(88 163.6 58.4)' fill='#1f150e'/><ellipse cx='95.2' cy='15.4' rx='1.3' ry='1.0' transform='rotate(114 95.2 15.4)' fill='#3a2a1c'/><ellipse cx='91.6' cy='30.4' rx='0.9' ry='0.6' transform='rotate(165 91.6 30.4)' fill='#2a1c12'/><ellipse cx='160.7' cy='131.9' rx='2.4' ry='1.5' transform='rotate(13 160.7 131.9)' fill='#3a2a1c'/><ellipse cx='44.1' cy='51.3' rx='1.3' ry='0.7' transform='rotate(92 44.1 51.3)' fill='#2a1c12'/><ellipse cx='134.1' cy='145.4' rx='1.4' ry='0.9' transform='rotate(7 134.1 145.4)' fill='#2a1c12'/><ellipse cx='98.0' cy='90.2' rx='1.2' ry='1.1' transform='rotate(157 98.0 90.2)' fill='#3a2a1c'/><ellipse cx='57.5' cy='72.8' rx='2.0' ry='1.4' transform='rotate(27 57.5 72.8)' fill='#2a1c12'/><ellipse cx='147.6' cy='125.1' rx='2.3' ry='1.7' transform='rotate(43 147.6 125.1)' fill='#3a2a1c'/><ellipse cx='154.2' cy='49.9' rx='1.1' ry='0.8' transform='rotate(43 154.2 49.9)' fill='#1f150e'/><ellipse cx='115.5' cy='26.9' rx='1.9' ry='1.1' transform='rotate(129 115.5 26.9)' fill='#2a1c12'/><ellipse cx='120.0' cy='59.4' rx='1.1' ry='0.8' transform='rotate(57 120.0 59.4)' fill='#3a2a1c'/><ellipse cx='18.1' cy='117.2' rx='2.5' ry='1.8' transform='rotate(107 18.1 117.2)' fill='#2a1c12'/><ellipse cx='52.5' cy='101.2' rx='3.1' ry='2.1' transform='rotate(128 52.5 101.2)' fill='#2a1c12'/><ellipse cx='161.5' cy='51.5' rx='1.9' ry='1.6' transform='rotate(13 161.5 51.5)' fill='#3a2a1c'/><ellipse cx='115.6' cy='141.6' rx='2.1' ry='1.3' transform='rotate(151 115.6 141.6)' fill='#3a2a1c'/><ellipse cx='69.1' cy='95.8' rx='2.7' ry='2.4' transform='rotate(12 69.1 95.8)' fill='#3a2a1c'/><ellipse cx='71.5' cy='43.1' rx='1.4' ry='1.0' transform='rotate(121 71.5 43.1)' fill='#1f150e'/><ellipse cx='138.8' cy='78.1' rx='1.1' ry='1.0' transform='rotate(161 138.8 78.1)' fill='#1f150e'/><ellipse cx='65.3' cy='64.6' rx='2.5' ry='1.8' transform='rotate(74 65.3 64.6)' fill='#3a2a1c'/><ellipse cx='55.0' cy='29.1' rx='1.7' ry='1.4' transform='rotate(94 55.0 29.1)' fill='#2a1c12'/><ellipse cx='115.3' cy='52.7' rx='0.8' ry='0.6' transform='rotate(20 115.3 52.7)' fill='#3a2a1c'/><ellipse cx='88.3' cy='124.4' rx='3.1' ry='1.9' transform='rotate(122 88.3 124.4)' fill='#2a1c12'/><ellipse cx='89.9' cy='105.5' rx='2.8' ry='2.1' transform='rotate(144 89.9 105.5)' fill='#2a1c12'/><ellipse cx='20.6' cy='42.5' rx='2.1' ry='1.2' transform='rotate(32 20.6 42.5)' fill='#3a2a1c'/><ellipse cx='98.1' cy='140.6' rx='2.0' ry='1.3' transform='rotate(79 98.1 140.6)' fill='#3a2a1c'/><ellipse cx='111.5' cy='132.7' rx='1.3' ry='0.9' transform='rotate(143 111.5 132.7)' fill='#3a2a1c'/><ellipse cx='132.8' cy='141.1' rx='2.0' ry='1.4' transform='rotate(8 132.8 141.1)' fill='#2a1c12'/><ellipse cx='160.6' cy='74.0' rx='1.9' ry='1.2' transform='rotate(43 160.6 74.0)' fill='#3a2a1c'/><ellipse cx='37.0' cy='99.7' rx='2.7' ry='2.3' transform='rotate(104 37.0 99.7)' fill='#1f150e'/><ellipse cx='115.8' cy='60.1' rx='0.7' ry='0.5' transform='rotate(68 115.8 60.1)' fill='#3a2a1c'/><ellipse cx='79.0' cy='143.2' rx='2.9' ry='2.4' transform='rotate(19 79.0 143.2)' fill='#3a2a1c'/><ellipse cx='86.0' cy='78.3' rx='1.3' ry='0.9' transform='rotate(85 86.0 78.3)' fill='#1f150e'/><ellipse cx='82.7' cy='82.3' rx='1.0' ry='0.9' transform='rotate(121 82.7 82.3)' fill='#3a2a1c'/><ellipse cx='47.4' cy='89.2' rx='2.6' ry='1.7' transform='rotate(59 47.4 89.2)' fill='#2a1c12'/><ellipse cx='131.2' cy='31.2' rx='0.8' ry='0.5' transform='rotate(147 131.2 31.2)' fill='#1f150e'/><ellipse cx='91.1' cy='131.2' rx='2.0' ry='1.4' transform='rotate(148 91.1 131.2)' fill='#1f150e'/><ellipse cx='122.5' cy='81.1' rx='0.6' ry='0.5' transform='rotate(75 122.5 81.1)' fill='#3a2a1c'/><ellipse cx='38.6' cy='70.8' rx='1.2' ry='0.9' transform='rotate(58 38.6 70.8)' fill='#1f150e'/><ellipse cx='94.2' cy='15.8' rx='2.4' ry='1.5' transform='rotate(47 94.2 15.8)' fill='#2a1c12'/><ellipse cx='74.4' cy='106.0' rx='2.1' ry='1.5' transform='rotate(159 74.4 106.0)' fill='#3a2a1c'/><ellipse cx='25.5' cy='56.7' rx='2.5' ry='2.1' transform='rotate(154 25.5 56.7)' fill='#2a1c12'/><ellipse cx='62.8' cy='33.0' rx='1.5' ry='1.2' transform='rotate(168 62.8 33.0)' fill='#3a2a1c'/><ellipse cx='89.9' cy='95.0' rx='0.9' ry='0.8' transform='rotate(36 89.9 95.0)' fill='#3a2a1c'/><ellipse cx='99.8' cy='22.0' rx='1.4' ry='1.1' transform='rotate(74 99.8 22.0)' fill='#3a2a1c'/><ellipse cx='139.0' cy='19.8' rx='1.3' ry='0.9' transform='rotate(36 139.0 19.8)' fill='#1f150e'/><ellipse cx='136.0' cy='96.1' rx='1.0' ry='0.9' transform='rotate(80 136.0 96.1)' fill='#1f150e'/><ellipse cx='26.5' cy='74.4' rx='2.2' ry='1.2' transform='rotate(155 26.5 74.4)' fill='#1f150e'/><ellipse cx='137.7' cy='83.1' rx='0.6' ry='0.5' transform='rotate(133 137.7 83.1)' fill='#1f150e'/><ellipse cx='91.2' cy='107.3' rx='2.9' ry='1.9' transform='rotate(38 91.2 107.3)' fill='#1f150e'/><ellipse cx='39.4' cy='140.7' rx='1.5' ry='0.9' transform='rotate(17 39.4 140.7)' fill='#1f150e'/><ellipse cx='157.8' cy='71.8' rx='1.2' ry='0.7' transform='rotate(163 157.8 71.8)' fill='#3a2a1c'/><ellipse cx='80.4' cy='133.9' rx='3.4' ry='2.1' transform='rotate(29 80.4 133.9)' fill='#2a1c12'/><ellipse cx='61.2' cy='46.9' rx='2.1' ry='1.4' transform='rotate(101 61.2 46.9)' fill='#1f150e'/><ellipse cx='63.5' cy='50.4' rx='2.0' ry='1.3' transform='rotate(170 63.5 50.4)' fill='#3a2a1c'/><ellipse cx='162.1' cy='68.6' rx='1.0' ry='0.7' transform='rotate(115 162.1 68.6)' fill='#1f150e'/><ellipse cx='114.3' cy='110.1' rx='1.3' ry='0.8' transform='rotate(33 114.3 110.1)' fill='#2a1c12'/><ellipse cx='117.8' cy='30.7' rx='1.3' ry='0.8' transform='rotate(166 117.8 30.7)' fill='#3a2a1c'/><ellipse cx='156.1' cy='87.1' rx='0.8' ry='0.6' transform='rotate(135 156.1 87.1)' fill='#2a1c12'/><ellipse cx='148.7' cy='140.1' rx='1.3' ry='0.8' transform='rotate(55 148.7 140.1)' fill='#3a2a1c'/><ellipse cx='97.5' cy='27.1' rx='1.2' ry='0.8' transform='rotate(161 97.5 27.1)' fill='#1f150e'/><ellipse cx='103.1' cy='56.1' rx='1.1' ry='0.6' transform='rotate(0 103.1 56.1)' fill='#1f150e'/><ellipse cx='156.8' cy='104.9' rx='0.6' ry='0.4' transform='rotate(81 156.8 104.9)' fill='#1f150e'/><ellipse cx='66.4' cy='64.9' rx='1.3' ry='1.1' transform='rotate(146 66.4 64.9)' fill='#3a2a1c'/><ellipse cx='100.2' cy='28.1' rx='1.8' ry='1.5' transform='rotate(107 100.2 28.1)' fill='#2a1c12'/><ellipse cx='23.3' cy='20.4' rx='2.1' ry='1.4' transform='rotate(125 23.3 20.4)' fill='#2a1c12'/><ellipse cx='103.0' cy='63.3' rx='0.9' ry='0.7' transform='rotate(29 103.0 63.3)' fill='#1f150e'/><ellipse cx='115.4' cy='27.3' rx='1.0' ry='0.8' transform='rotate(151 115.4 27.3)' fill='#2a1c12'/><ellipse cx='39.9' cy='27.9' rx='2.6' ry='1.5' transform='rotate(89 39.9 27.9)' fill='#3a2a1c'/><ellipse cx='97.5' cy='59.4' rx='0.8' ry='0.6' transform='rotate(8 97.5 59.4)' fill='#2a1c12'/><ellipse cx='71.9' cy='42.1' rx='1.8' ry='1.1' transform='rotate(23 71.9 42.1)' fill='#1f150e'/><ellipse cx='124.8' cy='88.3' rx='0.8' ry='0.5' transform='rotate(19 124.8 88.3)' fill='#1f150e'/><ellipse cx='89.8' cy='123.4' rx='2.7' ry='2.1' transform='rotate(41 89.8 123.4)' fill='#1f150e'/><ellipse cx='40.6' cy='51.2' rx='1.2' ry='0.8' transform='rotate(93 40.6 51.2)' fill='#2a1c12'/><ellipse cx='101.8' cy='31.5' rx='1.2' ry='0.7' transform='rotate(44 101.8 31.5)' fill='#3a2a1c'/><ellipse cx='122.5' cy='23.5' rx='1.3' ry='1.0' transform='rotate(177 122.5 23.5)' fill='#1f150e'/><ellipse cx='49.6' cy='120.9' rx='1.9' ry='1.2' transform='rotate(15 49.6 120.9)' fill='#2a1c12'/><ellipse cx='105.0' cy='40.0' rx='0.9' ry='0.8' transform='rotate(142 105.0 40.0)' fill='#1f150e'/><ellipse cx='30.9' cy='48.5' rx='2.3' ry='1.8' transform='rotate(27 30.9 48.5)' fill='#2a1c12'/><ellipse cx='131.2' cy='42.9' rx='1.4' ry='1.1' transform='rotate(128 131.2 42.9)' fill='#1f150e'/><ellipse cx='164.6' cy='123.4' rx='1.7' ry='1.2' transform='rotate(140 164.6 123.4)' fill='#1f150e'/><ellipse cx='128.5' cy='102.2' rx='0.8' ry='0.6' transform='rotate(152 128.5 102.2)' fill='#2a1c12'/><ellipse cx='31.6' cy='113.3' rx='1.7' ry='1.0' transform='rotate(174 31.6 113.3)' fill='#3a2a1c'/><ellipse cx='131.5' cy='83.0' rx='0.8' ry='0.6' transform='rotate(55 131.5 83.0)' fill='#1f150e'/><ellipse cx='127.5' cy='129.0' rx='2.1' ry='1.6' transform='rotate(78 127.5 129.0)' fill='#3a2a1c'/><ellipse cx='133.3' cy='134.3' rx='1.4' ry='1.3' transform='rotate(96 133.3 134.3)' fill='#3a2a1c'/><ellipse cx='35.0' cy='147.7' rx='2.4' ry='1.5' transform='rotate(151 35.0 147.7)' fill='#1f150e'/><ellipse cx='53.3' cy='95.5' rx='2.7' ry='2.3' transform='rotate(104 53.3 95.5)' fill='#3a2a1c'/><ellipse cx='148.8' cy='21.9' rx='1.9' ry='1.3' transform='rotate(113 148.8 21.9)' fill='#2a1c12'/><ellipse cx='139.4' cy='70.7' rx='0.7' ry='0.5' transform='rotate(151 139.4 70.7)' fill='#2a1c12'/><ellipse cx='115.5' cy='138.9' rx='1.6' ry='1.0' transform='rotate(54 115.5 138.9)' fill='#3a2a1c'/><ellipse cx='20.4' cy='30.2' rx='2.5' ry='1.7' transform='rotate(109 20.4 30.2)' fill='#2a1c12'/><ellipse cx='39.4' cy='89.7' rx='1.3' ry='0.9' transform='rotate(84 39.4 89.7)' fill='#1f150e'/><ellipse cx='60.9' cy='27.1' rx='1.6' ry='1.3' transform='rotate(80 60.9 27.1)' fill='#3a2a1c'/><ellipse cx='97.1' cy='48.1' rx='0.8' ry='0.6' transform='rotate(68 97.1 48.1)' fill='#1f150e'/><ellipse cx='75.3' cy='60.6' rx='1.4' ry='0.8' transform='rotate(63 75.3 60.6)' fill='#3a2a1c'/><ellipse cx='147.6' cy='146.6' rx='1.4' ry='0.9' transform='rotate(158 147.6 146.6)' fill='#3a2a1c'/><ellipse cx='45.8' cy='128.8' rx='1.8' ry='1.4' transform='rotate(0 45.8 128.8)' fill='#1f150e'/><ellipse cx='33.3' cy='48.7' rx='2.1' ry='1.6' transform='rotate(133 33.3 48.7)' fill='#3a2a1c'/><ellipse cx='32.8' cy='90.7' rx='2.5' ry='1.9' transform='rotate(68 32.8 90.7)' fill='#2a1c12'/><ellipse cx='115.9' cy='25.4' rx='1.9' ry='1.3' transform='rotate(172 115.9 25.4)' fill='#2a1c12'/><ellipse cx='62.9' cy='112.2' rx='2.9' ry='2.6' transform='rotate(146 62.9 112.2)' fill='#1f150e'/><ellipse cx='151.4' cy='83.2' rx='0.9' ry='0.8' transform='rotate(10 151.4 83.2)' fill='#3a2a1c'/><ellipse cx='35.5' cy='66.7' rx='1.7' ry='1.2' transform='rotate(27 35.5 66.7)' fill='#3a2a1c'/><ellipse cx='128.2' cy='19.8' rx='1.5' ry='0.9' transform='rotate(172 128.2 19.8)' fill='#2a1c12'/><ellipse cx='39.2' cy='95.5' rx='2.1' ry='1.2' transform='rotate(71 39.2 95.5)' fill='#3a2a1c'/><ellipse cx='104.7' cy='149.6' rx='2.8' ry='1.8' transform='rotate(139 104.7 149.6)' fill='#1f150e'/><ellipse cx='79.8' cy='149.0' rx='2.9' ry='2.4' transform='rotate(122 79.8 149.0)' fill='#2a1c12'/><ellipse cx='90.5' cy='148.5' rx='2.3' ry='2.0' transform='rotate(58 90.5 148.5)' fill='#3a2a1c'/><ellipse cx='90.9' cy='21.6' rx='1.7' ry='1.5' transform='rotate(36 90.9 21.6)' fill='#1f150e'/><ellipse cx='41.8' cy='116.2' rx='1.4' ry='0.9' transform='rotate(10 41.8 116.2)' fill='#2a1c12'/><ellipse cx='160.8' cy='121.5' rx='1.5' ry='1.2' transform='rotate(49 160.8 121.5)' fill='#2a1c12'/><ellipse cx='47.0' cy='59.0' rx='1.9' ry='1.1' transform='rotate(47 47.0 59.0)' fill='#2a1c12'/><ellipse cx='65.0' cy='123.7' rx='2.5' ry='1.5' transform='rotate(167 65.0 123.7)' fill='#3a2a1c'/><ellipse cx='84.2' cy='129.7' rx='2.8' ry='2.3' transform='rotate(57 84.2 129.7)' fill='#1f150e'/><ellipse cx='59.0' cy='88.4' rx='2.2' ry='1.9' transform='rotate(74 59.0 88.4)' fill='#1f150e'/><ellipse cx='58.5' cy='64.7' rx='2.6' ry='1.9' transform='rotate(52 58.5 64.7)' fill='#3a2a1c'/><ellipse cx='35.8' cy='76.6' rx='1.2' ry='0.9' transform='rotate(126 35.8 76.6)' fill='#2a1c12'/><ellipse cx='70.0' cy='143.8' rx='2.1' ry='1.3' transform='rotate(13 70.0 143.8)' fill='#3a2a1c'/><ellipse cx='32.2' cy='97.6' rx='2.5' ry='2.1' transform='rotate(128 32.2 97.6)' fill='#2a1c12'/><ellipse cx='42.4' cy='39.2' rx='2.3' ry='1.9' transform='rotate(21 42.4 39.2)' fill='#2a1c12'/><ellipse cx='76.0' cy='143.8' rx='3.1' ry='2.0' transform='rotate(71 76.0 143.8)' fill='#2a1c12'/><ellipse cx='69.4' cy='40.4' rx='2.6' ry='1.9' transform='rotate(94 69.4 40.4)' fill='#3a2a1c'/><ellipse cx='154.3' cy='54.6' rx='0.8' ry='0.6' transform='rotate(166 154.3 54.6)' fill='#1f150e'/><ellipse cx='91.8' cy='131.7' rx='2.9' ry='2.2' transform='rotate(73 91.8 131.7)' fill='#3a2a1c'/><ellipse cx='125.1' cy='122.6' rx='2.0' ry='1.7' transform='rotate(24 125.1 122.6)' fill='#1f150e'/><ellipse cx='116.7' cy='118.3' rx='1.7' ry='1.5' transform='rotate(162 116.7 118.3)' fill='#3a2a1c'/><ellipse cx='160.6' cy='142.4' rx='1.5' ry='1.0' transform='rotate(117 160.6 142.4)' fill='#3a2a1c'/><ellipse cx='74.5' cy='137.8' rx='3.0' ry='2.5' transform='rotate(109 74.5 137.8)' fill='#3a2a1c'/><ellipse cx='58.1' cy='44.2' rx='1.5' ry='0.9' transform='rotate(122 58.1 44.2)' fill='#1f150e'/><ellipse cx='70.9' cy='110.8' rx='1.7' ry='1.4' transform='rotate(59 70.9 110.8)' fill='#1f150e'/><ellipse cx='85.3' cy='119.7' rx='2.4' ry='1.8' transform='rotate(176 85.3 119.7)' fill='#3a2a1c'/><ellipse cx='99.6' cy='125.6' rx='1.6' ry='1.3' transform='rotate(20 99.6 125.6)' fill='#1f150e'/><ellipse cx='61.2' cy='143.3' rx='3.5' ry='2.6' transform='rotate(41 61.2 143.3)' fill='#3a2a1c'/><ellipse cx='134.6' cy='43.6' rx='1.3' ry='1.1' transform='rotate(97 134.6 43.6)' fill='#1f150e'/><ellipse cx='50.8' cy='38.7' rx='2.5' ry='1.6' transform='rotate(67 50.8 38.7)' fill='#3a2a1c'/><ellipse cx='58.2' cy='27.3' rx='1.3' ry='0.9' transform='rotate(172 58.2 27.3)' fill='#2a1c12'/><ellipse cx='51.3' cy='133.9' rx='3.6' ry='3.0' transform='rotate(173 51.3 133.9)' fill='#2a1c12'/><ellipse cx='114.7' cy='49.5' rx='1.1' ry='0.9' transform='rotate(78 114.7 49.5)' fill='#3a2a1c'/><ellipse cx='147.4' cy='99.6' rx='0.8' ry='0.6' transform='rotate(20 147.4 99.6)' fill='#1f150e'/><ellipse cx='59.5' cy='41.6' rx='2.3' ry='1.7' transform='rotate(79 59.5 41.6)' fill='#1f150e'/><ellipse cx='134.2' cy='116.8' rx='2.1' ry='1.3' transform='rotate(136 134.2 116.8)' fill='#2a1c12'/><ellipse cx='127.9' cy='144.9' rx='2.3' ry='1.8' transform='rotate(130 127.9 144.9)' fill='#1f150e'/><ellipse cx='70.0' cy='72.3' rx='2.5' ry='1.9' transform='rotate(135 70.0 72.3)' fill='#3a2a1c'/><ellipse cx='56.8' cy='63.7' rx='1.4' ry='1.1' transform='rotate(178 56.8 63.7)' fill='#2a1c12'/><ellipse cx='33.5' cy='116.3' rx='2.3' ry='1.6' transform='rotate(5 33.5 116.3)' fill='#3a2a1c'/><ellipse cx='84.9' cy='29.0' rx='1.1' ry='0.7' transform='rotate(140 84.9 29.0)' fill='#2a1c12'/><ellipse cx='89.4' cy='26.3' rx='1.5' ry='1.0' transform='rotate(162 89.4 26.3)' fill='#1f150e'/><ellipse cx='142.9' cy='87.4' rx='0.8' ry='0.6' transform='rotate(64 142.9 87.4)' fill='#3a2a1c'/><ellipse cx='21.1' cy='139.5' rx='2.3' ry='2.0' transform='rotate(176 21.1 139.5)' fill='#2a1c12'/><ellipse cx='131.8' cy='114.4' rx='1.2' ry='1.1' transform='rotate(79 131.8 114.4)' fill='#1f150e'/><ellipse cx='19.9' cy='44.3' rx='2.1' ry='1.4' transform='rotate(2 19.9 44.3)' fill='#1f150e'/><ellipse cx='86.2' cy='20.9' rx='2.2' ry='1.7' transform='rotate(13 86.2 20.9)' fill='#2a1c12'/><ellipse cx='67.8' cy='91.7' rx='1.9' ry='1.6' transform='rotate(163 67.8 91.7)' fill='#1f150e'/><ellipse cx='53.8' cy='139.1' rx='2.3' ry='1.4' transform='rotate(106 53.8 139.1)' fill='#1f150e'/><ellipse cx='156.9' cy='75.3' rx='1.1' ry='0.9' transform='rotate(123 156.9 75.3)' fill='#2a1c12'/><ellipse cx='130.0' cy='93.1' rx='1.2' ry='1.0' transform='rotate(30 130.0 93.1)' fill='#3a2a1c'/><ellipse cx='116.9' cy='112.8' rx='1.3' ry='1.0' transform='rotate(125 116.9 112.8)' fill='#2a1c12'/><ellipse cx='107.1' cy='31.2' rx='1.0' ry='0.7' transform='rotate(126 107.1 31.2)' fill='#1f150e'/><ellipse cx='18.7' cy='92.6' rx='2.3' ry='1.5' transform='rotate(133 18.7 92.6)' fill='#3a2a1c'/><ellipse cx='23.6' cy='27.9' rx='2.7' ry='2.3' transform='rotate(7 23.6 27.9)' fill='#1f150e'/><ellipse cx='77.1' cy='143.9' rx='3.5' ry='2.9' transform='rotate(8 77.1 143.9)' fill='#3a2a1c'/><ellipse cx='111.9' cy='140.9' rx='1.4' ry='0.8' transform='rotate(3 111.9 140.9)' fill='#1f150e'/><ellipse cx='129.6' cy='135.9' rx='1.1' ry='0.7' transform='rotate(95 129.6 135.9)' fill='#3a2a1c'/><ellipse cx='93.3' cy='29.5' rx='2.1' ry='1.8' transform='rotate(165 93.3 29.5)' fill='#1f150e'/><ellipse cx='28.6' cy='19.1' rx='2.2' ry='1.3' transform='rotate(101 28.6 19.1)' fill='#3a2a1c'/><ellipse cx='105.4' cy='124.5' rx='1.7' ry='0.9' transform='rotate(98 105.4 124.5)' fill='#2a1c12'/><ellipse cx='85.2' cy='106.9' rx='2.7' ry='1.7' transform='rotate(34 85.2 106.9)' fill='#3a2a1c'/><ellipse cx='137.3' cy='77.7' rx='0.7' ry='0.5' transform='rotate(37 137.3 77.7)' fill='#2a1c12'/><ellipse cx='162.5' cy='98.9' rx='1.1' ry='0.8' transform='rotate(122 162.5 98.9)' fill='#1f150e'/><ellipse cx='125.3' cy='131.4' rx='2.2' ry='1.3' transform='rotate(66 125.3 131.4)' fill='#2a1c12'/><ellipse cx='63.5' cy='55.5' rx='1.9' ry='1.5' transform='rotate(60 63.5 55.5)' fill='#1f150e'/><ellipse cx='19.0' cy='25.3' rx='1.3' ry='1.1' transform='rotate(108 19.0 25.3)' fill='#3a2a1c'/><ellipse cx='74.7' cy='149.8' rx='3.4' ry='2.6' transform='rotate(38 74.7 149.8)' fill='#3a2a1c'/><ellipse cx='128.5' cy='25.9' rx='1.0' ry='0.6' transform='rotate(131 128.5 25.9)' fill='#3a2a1c'/><ellipse cx='118.1' cy='131.4' rx='1.6' ry='1.4' transform='rotate(32 118.1 131.4)' fill='#2a1c12'/><ellipse cx='82.9' cy='111.8' rx='2.0' ry='1.3' transform='rotate(63 82.9 111.8)' fill='#2a1c12'/><ellipse cx='74.2' cy='37.2' rx='1.4' ry='1.2' transform='rotate(118 74.2 37.2)' fill='#2a1c12'/><ellipse cx='130.1' cy='129.6' rx='2.4' ry='1.9' transform='rotate(49 130.1 129.6)' fill='#1f150e'/><ellipse cx='19.9' cy='88.7' rx='1.7' ry='1.3' transform='rotate(64 19.9 88.7)' fill='#2a1c12'/><ellipse cx='18.3' cy='120.6' rx='1.5' ry='1.0' transform='rotate(14 18.3 120.6)' fill='#1f150e'/><ellipse cx='33.4' cy='128.1' rx='1.7' ry='1.3' transform='rotate(66 33.4 128.1)' fill='#3a2a1c'/><ellipse cx='35.9' cy='77.8' rx='1.5' ry='0.8' transform='rotate(119 35.9 77.8)' fill='#1f150e'/><ellipse cx='155.9' cy='70.8' rx='1.4' ry='1.1' transform='rotate(174 155.9 70.8)' fill='#1f150e'/><ellipse cx='113.2' cy='44.9' rx='1.2' ry='1.1' transform='rotate(129 113.2 44.9)' fill='#2a1c12'/><ellipse cx='123.2' cy='150.6' rx='1.2' ry='0.9' transform='rotate(124 123.2 150.6)' fill='#3a2a1c'/><ellipse cx='157.4' cy='53.9' rx='0.9' ry='0.6' transform='rotate(173 157.4 53.9)' fill='#1f150e'/><ellipse cx='119.6' cy='43.7' rx='0.8' ry='0.7' transform='rotate(116 119.6 43.7)' fill='#3a2a1c'/><ellipse cx='38.9' cy='24.5' rx='1.3' ry='0.9' transform='rotate(14 38.9 24.5)' fill='#3a2a1c'/><ellipse cx='27.8' cy='17.0' rx='1.7' ry='1.0' transform='rotate(20 27.8 17.0)' fill='#2a1c12'/><ellipse cx='113.3' cy='84.9' rx='1.3' ry='1.2' transform='rotate(81 113.3 84.9)' fill='#1f150e'/><ellipse cx='55.5' cy='69.1' rx='2.3' ry='1.4' transform='rotate(178 55.5 69.1)' fill='#1f150e'/><ellipse cx='144.6' cy='78.1' rx='0.9' ry='0.5' transform='rotate(70 144.6 78.1)' fill='#1f150e'/><ellipse cx='33.7' cy='43.6' rx='1.7' ry='1.1' transform='rotate(112 33.7 43.6)' fill='#1f150e'/><ellipse cx='28.7' cy='27.3' rx='2.4' ry='1.9' transform='rotate(56 28.7 27.3)' fill='#2a1c12'/><ellipse cx='44.5' cy='34.7' rx='1.3' ry='1.2' transform='rotate(69 44.5 34.7)' fill='#3a2a1c'/><ellipse cx='31.1' cy='95.0' rx='1.2' ry='0.8' transform='rotate(48 31.1 95.0)' fill='#1f150e'/><ellipse cx='155.6' cy='63.7' rx='1.1' ry='0.6' transform='rotate(66 155.6 63.7)' fill='#3a2a1c'/><ellipse cx='55.0' cy='65.2' rx='2.0' ry='1.2' transform='rotate(45 55.0 65.2)' fill='#1f150e'/><ellipse cx='59.9' cy='67.2' rx='2.4' ry='1.5' transform='rotate(35 59.9 67.2)' fill='#1f150e'/><ellipse cx='130.1' cy='131.9' rx='1.3' ry='1.2' transform='rotate(47 130.1 131.9)' fill='#1f150e'/><ellipse cx='25.4' cy='105.9' rx='2.5' ry='1.6' transform='rotate(5 25.4 105.9)' fill='#2a1c12'/><ellipse cx='89.7' cy='30.1' rx='1.1' ry='0.8' transform='rotate(73 89.7 30.1)' fill='#2a1c12'/><ellipse cx='88.5' cy='38.8' rx='0.8' ry='0.6' transform='rotate(21 88.5 38.8)' fill='#1f150e'/><ellipse cx='57.1' cy='75.8' rx='1.5' ry='1.0' transform='rotate(10 57.1 75.8)' fill='#3a2a1c'/><ellipse cx='50.7' cy='117.0' rx='2.7' ry='2.3' transform='rotate(173 50.7 117.0)' fill='#2a1c12'/><ellipse cx='34.2' cy='144.3' rx='2.0' ry='1.3' transform='rotate(31 34.2 144.3)' fill='#2a1c12'/><ellipse cx='49.2' cy='26.4' rx='1.6' ry='1.4' transform='rotate(83 49.2 26.4)' fill='#3a2a1c'/><ellipse cx='37.4' cy='125.5' rx='2.2' ry='1.3' transform='rotate(51 37.4 125.5)' fill='#2a1c12'/><ellipse cx='28.0' cy='111.4' rx='1.9' ry='1.2' transform='rotate(92 28.0 111.4)' fill='#3a2a1c'/><ellipse cx='114.0' cy='85.5' rx='0.6' ry='0.4' transform='rotate(133 114.0 85.5)' fill='#3a2a1c'/><ellipse cx='113.3' cy='120.8' rx='1.9' ry='1.2' transform='rotate(66 113.3 120.8)' fill='#2a1c12'/><ellipse cx='136.1' cy='144.5' rx='2.0' ry='1.7' transform='rotate(66 136.1 144.5)' fill='#3a2a1c'/><ellipse cx='44.7' cy='46.1' rx='2.1' ry='1.8' transform='rotate(15 44.7 46.1)' fill='#1f150e'/><ellipse cx='143.0' cy='54.1' rx='1.4' ry='1.2' transform='rotate(55 143.0 54.1)' fill='#2a1c12'/><ellipse cx='103.7' cy='143.7' rx='2.3' ry='1.8' transform='rotate(2 103.7 143.7)' fill='#2a1c12'/><ellipse cx='52.3' cy='80.4' rx='2.0' ry='1.7' transform='rotate(89 52.3 80.4)' fill='#1f150e'/><ellipse cx='109.3' cy='44.6' rx='1.3' ry='0.8' transform='rotate(180 109.3 44.6)' fill='#2a1c12'/><ellipse cx='57.8' cy='148.6' rx='3.1' ry='1.7' transform='rotate(32 57.8 148.6)' fill='#2a1c12'/><ellipse cx='116.3' cy='18.1' rx='1.5' ry='0.9' transform='rotate(149 116.3 18.1)' fill='#1f150e'/><ellipse cx='40.8' cy='126.2' rx='2.1' ry='1.5' transform='rotate(99 40.8 126.2)' fill='#2a1c12'/><ellipse cx='38.2' cy='47.9' rx='1.3' ry='1.2' transform='rotate(27 38.2 47.9)' fill='#1f150e'/><ellipse cx='164.8' cy='33.5' rx='1.4' ry='1.2' transform='rotate(30 164.8 33.5)' fill='#2a1c12'/><ellipse cx='42.6' cy='95.2' rx='1.9' ry='1.3' transform='rotate(160 42.6 95.2)' fill='#3a2a1c'/><ellipse cx='50.8' cy='35.7' rx='2.3' ry='2.1' transform='rotate(128 50.8 35.7)' fill='#1f150e'/><ellipse cx='25.6' cy='140.3' rx='1.3' ry='0.7' transform='rotate(52 25.6 140.3)' fill='#2a1c12'/><ellipse cx='128.8' cy='39.0' rx='0.7' ry='0.4' transform='rotate(68 128.8 39.0)' fill='#2a1c12'/><ellipse cx='136.6' cy='104.5' rx='1.0' ry='0.6' transform='rotate(44 136.6 104.5)' fill='#3a2a1c'/><ellipse cx='96.0' cy='108.1' rx='2.3' ry='1.7' transform='rotate(100 96.0 108.1)' fill='#2a1c12'/><ellipse cx='29.2' cy='138.0' rx='2.1' ry='1.3' transform='rotate(125 29.2 138.0)' fill='#2a1c12'/><ellipse cx='112.6' cy='71.4' rx='1.4' ry='0.9' transform='rotate(148 112.6 71.4)' fill='#3a2a1c'/><ellipse cx='127.0' cy='100.5' rx='1.0' ry='0.8' transform='rotate(144 127.0 100.5)' fill='#1f150e'/><ellipse cx='83.4' cy='61.6' rx='1.2' ry='1.1' transform='rotate(160 83.4 61.6)' fill='#2a1c12'/><ellipse cx='158.9' cy='122.6' rx='1.3' ry='0.9' transform='rotate(172 158.9 122.6)' fill='#1f150e'/><ellipse cx='97.8' cy='69.9' rx='0.7' ry='0.6' transform='rotate(67 97.8 69.9)' fill='#3a2a1c'/><ellipse cx='70.9' cy='105.9' rx='3.1' ry='1.8' transform='rotate(40 70.9 105.9)' fill='#1f150e'/><ellipse cx='147.2' cy='30.5' rx='1.0' ry='0.9' transform='rotate(111 147.2 30.5)' fill='#3a2a1c'/><ellipse cx='29.4' cy='94.8' rx='2.7' ry='2.0' transform='rotate(64 29.4 94.8)' fill='#3a2a1c'/><ellipse cx='110' cy='85' rx='3.5' ry='2' fill='#6a6a55'/><ellipse cx='140' cy='84' rx='3.5' ry='2' fill='#6a6a55'/><path d='M116 108 C122 100 136 100 142 108 C144 120 138 128 129 130 C120 128 114 120 116 108 Z' fill='#a88462'/><ellipse cx='129' cy='121' rx='5' ry='3' fill='#3a2a22'/><path d='M86 138 C94 130 104 132 108 142 L104 152 H86 Z' fill='#dcd8d0'/><path d='M112 130 C128 136 150 136 172 132 L176 152 H108 Z' fill='#4d4d44'/></g></g><g filter='url(#bl2)' fill='#79bc88'><ellipse cx='148' cy='20' rx='12' ry='5' transform='rotate(-25 148 20)' fill='#86c897'/><ellipse cx='172' cy='27' rx='15' ry='6' transform='rotate(-30 172 27)' fill='#7abf8a'/><ellipse cx='200' cy='22' rx='16' ry='6' transform='rotate(-15 200 22)' fill='#8acb99'/><ellipse cx='226' cy='28' rx='15' ry='5.5' transform='rotate(-40 226 28)' fill='#6fb07e'/><ellipse cx='170' cy='47' rx='12' ry='5' transform='rotate(-55 170 47)' fill='#79bc88'/><ellipse cx='194' cy='42' rx='11' ry='4.5' transform='rotate(-60 194 42)' fill='#86c897'/><ellipse cx='218' cy='47' rx='11' ry='4.5' transform='rotate(-55 218 47)' fill='#6aa878'/><ellipse cx='244' cy='20' rx='10' ry='5' transform='rotate(-10 244 20)' fill='#5a9a66'/><ellipse cx='158' cy='60' rx='9' ry='4' transform='rotate(-45 158 60)' fill='#5e9e6a'/><ellipse cx='185' cy='35' rx='8' ry='4' transform='rotate(20 185 35)' fill='#9ad4a6'/><ellipse cx='210' cy='35' rx='9' ry='4' transform='rotate(10 210 35)' fill='#7ec08c'/></g><path d='M184.7 151.7 V125.5 A13 13 0 0 1 197.7 112.5 H244.5 A13 13 0 0 1 257.5 125.5 V138.7 A13 13 0 0 1 244.5 151.7 Z' fill='#fff'/></g></svg><svg style='left:0;top:0;z-index:3' width='400' height='500'><path d='M248.63 284.05 A9.30 9.30 0 1 1 260.17 284.05 L258.40 286.40 H250.40 Z' fill='#14ad8d'/><rect x='249.50' y='288.10' width='9.80' height='3.10' rx='1.50' fill='#0d8a70'/><polygon points='254.40,271.60 256.24,275.36 260.00,277.20 256.24,279.04 254.40,282.80 252.56,279.04 248.80,277.20 252.56,275.36' fill='#fff'/><path d='M273.40 279.60 A14.40 14.40 0 1 1 287.80 294.00 H273.40 Z' fill='#0c7c63'/><path d='M294.81 274.12 A8.90 8.90 0 1 0 296.70 280.80 H289.80' fill='none' stroke='#fff' stroke-width='2.70'/></svg><div class='a' style='left:46.7px;top:326.4px;width:265px;height:151.8px;border:3px solid #bf4424;box-sizing:border-box;background:#fff'></div><div class='a' style='left:50px;top:329.4px;width:1263px;height:745px;transform:scale(0.2043);transform-origin:0 0;overflow:hidden'><div class='a' style='left:98px;top:78.8px;font-size:57.5px;font-weight:700;color:#e02828;-webkit-text-stroke:1.5px #e02828;line-height:0;white-space:pre'>Cheetah</div><div class='a' style='left:96px;top:218.0px;width:1071px;font-size:47.36px;line-height:0;color:#444;-webkit-text-stroke:1.2px #444;text-align:justify;text-align-last:justify;'>The cheetah is a large cat and the fastest land</div><div class='a' style='left:96px;top:268.4px;width:1071px;font-size:47.36px;line-height:0;color:#444;-webkit-text-stroke:1.2px #444;text-align:justify;text-align-last:justify;'>animal. It has a tawny to creamy white or pale buff</div><div class='a' style='left:96px;top:318.8px;width:1071px;font-size:47.36px;line-height:0;color:#444;-webkit-text-stroke:1.2px #444;text-align:justify;text-align-last:justify;'>fur that is marked with evenly spaced, solid black</div><div class='a' style='left:96px;top:369.3px;width:1071px;font-size:47.36px;line-height:0;color:#444;-webkit-text-stroke:1.2px #444;text-align:justify;text-align-last:justify;'>spots. The head is small and rounded, with a short</div><div class='a' style='left:96px;top:419.7px;width:1071px;font-size:47.36px;line-height:0;color:#444;-webkit-text-stroke:1.2px #444;'>snout and black tear-like facial streaks.</div></div><svg style='left:0;top:0;z-index:3' width='400' height='500'><path d='M235.4 474 V447.4 A12 12 0 0 1 247.4 435.4 H294 A12 12 0 0 1 306 447.4 V462 A12 12 0 0 1 294 474' fill='#fff' stroke='#d4d4d4' stroke-width='1.2'/><path d='M248.53 459.85 A9.30 9.30 0 1 1 260.07 459.85 L258.30 462.20 H250.30 Z' fill='#14ad8d'/><rect x='249.40' y='463.90' width='9.80' height='3.10' rx='1.50' fill='#0d8a70'/><polygon points='254.30,447.40 256.14,451.16 259.90,453.00 256.14,454.84 254.30,458.60 252.46,454.84 248.70,453.00 252.46,451.16' fill='#fff'/><path d='M273.94 454.20 A14.26 14.26 0 1 1 288.20 468.46 H273.94 Z' fill='#0c7c63'/><path d='M295.14 448.78 A8.81 8.81 0 1 0 297.01 455.39 H290.18' fill='none' stroke='#fff' stroke-width='2.67'/></svg><svg style='left:0;top:0;z-index:9' width='800' height='700'><path d='M717.93 644.75 A9.30 9.30 0 1 1 729.47 644.75 L727.70 647.10 H719.70 Z' fill='#14ad8d'/><rect x='718.80' y='648.80' width='9.80' height='3.10' rx='1.50' fill='#0d8a70'/><polygon points='723.70,632.30 725.54,636.06 729.30,637.90 725.54,639.74 723.70,643.50 721.86,639.74 718.10,637.90 721.86,636.06' fill='#fff'/><path d='M674.5 642.5 L686.4 630.5 L692.6 636.5 L680.6 648.4 Z' fill='#15b597' stroke='#0d7d64' stroke-width='1.2' stroke-linejoin='round'/><path d='M674.5 642.5 L680.6 648.4 L677.6 649.4 L673.5 645.4 Z' fill='#f7d9a8'/><path d='M673.5 645.4 L677.6 649.4 L670.8 651 Z' fill='#3a3a4a'/><polygon points='672.20,626.70 673.19,629.31 675.80,630.30 673.19,631.29 672.20,633.90 671.21,631.29 668.60,630.30 671.21,629.31' fill='#14ad8d'/><polygon points='666.50,633.90 667.35,635.95 669.40,636.80 667.35,637.65 666.50,639.70 665.65,637.65 663.60,636.80 665.65,635.95' fill='#14ad8d'/></svg>
<div class='t' style='left:142px;top:33.5px;font-size:18px;font-weight:400;color:#242424;transform:scaleX(0.9992);'>Presentation22</div>
<div class='t' style='left:25.7px;top:85.4px;font-size:18px;font-weight:400;color:#424242;transform:scaleX(0.9064);'>File</div>
<div class='t' style='left:84px;top:85.4px;font-size:18px;font-weight:400;color:#242424;transform:scaleX(1.0622);-webkit-text-stroke:0.40px #242424;'>Home</div>
<div class='t' style='left:166px;top:85.4px;font-size:18px;font-weight:400;color:#424242;transform:scaleX(1.0215);'>Insert</div>
<div class='t' style='left:243px;top:85.4px;font-size:18px;font-weight:400;color:#424242;transform:scaleX(0.9996);'>Draw</div>
<div class='t' style='left:317px;top:85.4px;font-size:18px;font-weight:400;color:#424242;transform:scaleX(0.9994);'>Design</div>
<div class='t' style='left:406px;top:85.4px;font-size:18px;font-weight:400;color:#424242;transform:scaleX(0.9843);'>Transitions</div>
<div class='t' style='left:526px;top:85.4px;font-size:18px;font-weight:400;color:#424242;transform:scaleX(1.0332);'>Animations</div>
<div class='t' style='left:651px;top:85.4px;font-size:18px;font-weight:400;color:#424242;transform:scaleX(0.9882);'>Slide Show</div>
<div class='t' style='left:773px;top:85.4px;font-size:18px;font-weight:400;color:#424242;transform:scaleX(0.9487);'>Review</div>
<div class='t' style='left:861px;top:85.4px;font-size:18px;font-weight:400;color:#424242;transform:scaleX(0.9818);'>View</div>
<div class='t' style='left:931px;top:85.4px;font-size:18px;font-weight:400;color:#424242;transform:scaleX(0.9992);'>Help</div>
<div class='t' style='left:1000px;top:85.4px;font-size:18px;font-weight:400;color:#b7472a;transform:scaleX(0.9796);'>Shape</div>
<div class='t' style='left:1435px;top:85.6px;font-size:16px;font-weight:400;color:#242424;transform:scaleX(0.9824);'>Comments</div>
<div class='t' style='left:1572px;top:85.6px;font-size:16px;font-weight:400;color:#242424;transform:scaleX(0.9680);'>Catch up</div>
<div class='t' style='left:1695px;top:85.6px;font-size:16px;font-weight:400;color:#242424;transform:scaleX(0.9249);'>Present</div>
<div class='t' style='left:1836px;top:85.6px;font-size:16px;font-weight:400;color:#242424;transform:scaleX(0.9607);'>Editing</div>
<div class='t' style='left:1965px;top:85.6px;font-size:16px;font-weight:400;color:#ffffff;transform:scaleX(0.9250);-webkit-text-stroke:0.35px #ffffff;'>Share</div>
<div class='t' style='left:2006px;top:32.2px;font-size:15px;font-weight:400;color:#5d4a10;transform:scaleX(0.9992);-webkit-text-stroke:0.33px #5d4a10;'>VK</div>
<div class='t' style='left:419px;top:140.4px;font-size:17px;font-weight:400;color:#242424;transform:scaleX(1.0436);'>Arial</div>
<div class='t' style='left:596.5px;top:140.4px;font-size:17px;font-weight:400;color:#242424;transform:scaleX(0.9671);'>36</div>
<div class='t' style='left:1812px;top:187.2px;font-size:18px;font-weight:400;color:#242424;transform:scaleX(1.0513);-webkit-text-stroke:0.40px #242424;'>Clipboard</div>
<div class='t' style='left:1849px;top:229.9px;font-size:18px;font-weight:400;color:#bdbdbd;transform:scaleX(0.9898);'>Delete</div>
<div class='t' style='left:1812px;top:282.0px;font-size:18px;font-weight:400;color:#242424;transform:scaleX(1.0553);-webkit-text-stroke:0.40px #242424;'>More Paragraph Options</div>
<div class='t' style='left:1849px;top:324.4px;font-size:18px;font-weight:400;color:#242424;transform:scaleX(0.9799);'>Line Spacing</div>
<div class='t' style='left:1849px;top:366.9px;font-size:18px;font-weight:400;color:#bdbdbd;transform:scaleX(1.0126);'>Left To Right</div>
<div class='t' style='left:1849px;top:410.0px;font-size:18px;font-weight:400;color:#bdbdbd;transform:scaleX(1.0126);'>Right To Left</div>
<div class='t' style='left:1849px;top:452.5px;font-size:18px;font-weight:400;color:#242424;transform:scaleX(1.0106);'>Paragraph Options</div>
<div class='t' style='left:32.5px;top:914.0px;font-size:16px;font-weight:400;color:#616161;transform:scaleX(0.9680);'>Slide 2 of 2</div>
<div class='t' style='left:133.3px;top:914.0px;font-size:16px;font-weight:400;color:#616161;transform:scaleX(0.9068);'>English (U.S.)</div>
<div class='t' style='left:1245.4px;top:913.5px;font-size:16px;font-weight:400;color:#616161;transform:scaleX(0.9714);'>Notes</div>
<div class='t' style='left:1298.8px;top:913.5px;font-size:16px;font-weight:400;color:#616161;transform:scaleX(0.9869);'>Give Feedback to Microsoft</div>
<div class='t' style='left:1943.5px;top:913.7px;font-size:16px;font-weight:400;color:#616161;transform:scaleX(0.9116);'>74%</div>
<div class='t' style='left:657px;top:244.8px;font-size:57.5px;font-weight:700;color:#ff0000;'>Cheetah</div>
<div class='t' style='left:25.4px;top:344.2px;font-size:17px;font-weight:400;color:#b7472a;transform:scaleX(0.9927);'>2</div>
</body></html>
